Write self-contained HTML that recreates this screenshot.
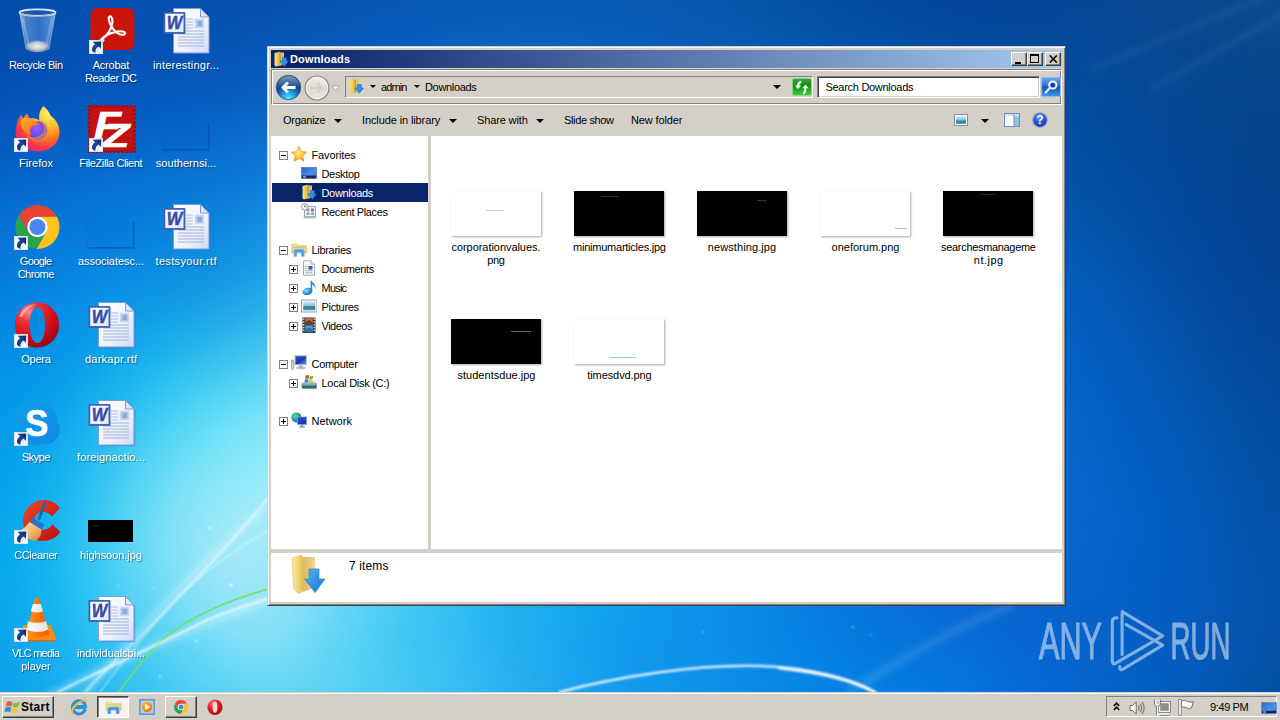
<!DOCTYPE html>
<html><head><meta charset="utf-8"><title>Downloads</title>
<style>
*{box-sizing:border-box;margin:0;padding:0}
html,body{width:1280px;height:720px;overflow:hidden}
body{position:relative;font-family:"Liberation Sans",sans-serif;font-size:11px;color:#000;background:#0c55b5}
.abs{position:absolute}
i{display:block;font-style:normal}
#wall{position:absolute;left:0;top:0;width:1280px;height:720px}
.dl{position:absolute;width:90px;text-align:center;color:#fff;font-size:11px;line-height:13px;text-shadow:1px 1px 1px rgba(0,0,0,.45);white-space:nowrap}
#tb{position:absolute;left:0;top:692px;width:1280px;height:28px;background:#d4d0c8}
#tb:before{content:"";position:absolute;left:0;top:1px;width:1280px;height:1px;background:#fff}
.btn{position:absolute;background:#d4d0c8;border:1px solid;border-color:#fff #404040 #404040 #fff;box-shadow:inset -1px -1px 0 #808080}
.btn.down{border-color:#404040 #fff #fff #404040;box-shadow:inset 1px 1px 0 #808080;background:#f5f4f1}
#tray{position:absolute;left:1106px;top:4px;width:171px;height:21px;border:1px solid;border-color:#808080 #fff #fff #808080}
#win{position:absolute;left:267px;top:46px;width:799px;height:560px;background:#d4d0c8;border:1px solid;border-color:#d4d0c8 #404040 #404040 #d4d0c8;box-shadow:inset 1px 1px 0 #fff,inset -1px -1px 0 #808080}
#win>*{position:absolute}
#title{left:3px;top:3px;width:791px;height:18px;background:linear-gradient(90deg,#0a246a 0%,#0a246a 3%,#a6caf0 100%);color:#fff;font-weight:bold;font-size:11px;line-height:18px}
.cb{position:absolute;top:2px;width:16px;height:14px;background:#d4d0c8;border:1px solid;border-color:#fff #404040 #404040 #fff;box-shadow:inset -1px -1px 0 #808080}
#nav{left:3px;top:22px;width:791px;height:36px;border:1px solid;border-color:#808080 #fff #fff #808080;box-shadow:inset 1px 1px 0 #fff,inset -1px -1px 0 #808080}
.sunk{position:absolute;background:#fff;border:1px solid;border-color:#808080 #fff #fff #808080;box-shadow:inset 1px 1px 0 #404040,inset -1px -1px 0 #d4d0c8}
.tx{letter-spacing:-.2px}
#cmd{left:3px;top:58px;width:791px;height:31px;line-height:31px;white-space:nowrap}
#cmd span{position:absolute;top:0}
.arr{position:absolute;width:0;height:0;border-style:solid;border-color:#000 transparent transparent transparent;border-width:4px 4px 0 4px}
#tree{left:3px;top:89px;width:157px;height:413px;background:#fff;overflow:hidden}
#files{left:163px;top:89px;width:631px;height:413px;background:#fff;overflow:hidden}
#det{left:3px;top:506px;width:791px;height:49px;background:#fff}
.tr{position:absolute;left:1px;width:156px;height:19px;line-height:19px;white-space:nowrap}
.tr.sel{background:#0a246a;color:#fff}
.tr span{position:absolute;top:1px}
.tr>*{margin-left:-1px}
.ex{position:absolute;top:6px;width:9px;height:9px;border:1px solid #808080;background:#fff}
.ex:before{content:"";position:absolute;left:1px;top:3px;width:5px;height:1px;background:#000}
.ex.p:after{content:"";position:absolute;left:3px;top:1px;width:1px;height:5px;background:#000}
.ti{position:absolute;top:1px;width:16px;height:16px}
.th{position:absolute;width:90px;height:45px;box-shadow:1px 1px 2px rgba(0,0,0,.35)}
.fl{position:absolute;width:120px;text-align:center;line-height:13px;font-size:11px}
.sunk1{position:absolute;border:1px solid;border-color:#808080 #fff #fff #808080}
</style></head><body>
<svg id="wall" width="1280" height="720" viewBox="0 0 1280 720">
<defs>
<linearGradient id="wbase" x1="0" y1="0" x2="1" y2="0"><stop offset="0" stop-color="#0f52b2"/><stop offset=".45" stop-color="#0f58b8"/><stop offset=".75" stop-color="#0b54b8"/><stop offset="1" stop-color="#094cb0"/></linearGradient>
<radialGradient id="wg1" cx="300" cy="600" r="1" gradientUnits="userSpaceOnUse" gradientTransform="translate(300 600) scale(1080 640) translate(-300 -600)">
<stop offset="0" stop-color="#48c0f4"/><stop offset=".25" stop-color="#2aa6ee"/><stop offset=".5" stop-color="#1a88e0"/><stop offset=".75" stop-color="#0e62ca"/><stop offset="1" stop-color="#0c58be" stop-opacity="0"/></radialGradient>
<radialGradient id="wg2" cx="300" cy="500" r="1" gradientUnits="userSpaceOnUse" gradientTransform="translate(300 500) scale(290 280) translate(-300 -500)">
<stop offset="0" stop-color="#8ee6fb"/><stop offset=".3" stop-color="#84e0fa" stop-opacity=".9"/><stop offset=".65" stop-color="#62ccf6" stop-opacity=".45"/><stop offset="1" stop-color="#48c0f4" stop-opacity="0"/></radialGradient>
<radialGradient id="wv1" cx="1280" cy="0" r="520" gradientUnits="userSpaceOnUse"><stop offset="0" stop-color="#053a8c" stop-opacity=".6"/><stop offset="1" stop-color="#053a8c" stop-opacity="0"/></radialGradient>
<radialGradient id="wv2" cx="1300" cy="760" r="260" gradientUnits="userSpaceOnUse"><stop offset="0" stop-color="#06348a" stop-opacity=".45"/><stop offset="1" stop-color="#06348a" stop-opacity="0"/></radialGradient>
<filter id="wmesh" x="-10%" y="-10%" width="120%" height="120%" color-interpolation-filters="sRGB"><feGaussianBlur stdDeviation="30"/></filter>
<filter id="wbl" x="-5%" y="-5%" width="110%" height="110%"><feGaussianBlur stdDeviation="0.8"/></filter>
<filter id="wbl2" x="-5%" y="-5%" width="110%" height="110%"><feGaussianBlur stdDeviation="3"/></filter>
</defs>
<rect width="1280" height="720" fill="#30b4f0"/>
<g filter="url(#wmesh)">
<rect x="-96" y="-96" width="49" height="49" fill="#054ba8"/>
<rect x="-48" y="-96" width="49" height="49" fill="#054ba8"/>
<rect x="0" y="-96" width="49" height="49" fill="#064ca9"/>
<rect x="48" y="-96" width="49" height="49" fill="#064eab"/>
<rect x="96" y="-96" width="49" height="49" fill="#064fad"/>
<rect x="144" y="-96" width="49" height="49" fill="#054fae"/>
<rect x="192" y="-96" width="49" height="49" fill="#054faf"/>
<rect x="240" y="-96" width="49" height="49" fill="#054faf"/>
<rect x="288" y="-96" width="49" height="49" fill="#0650b0"/>
<rect x="336" y="-96" width="49" height="49" fill="#0552b1"/>
<rect x="384" y="-96" width="49" height="49" fill="#0654b2"/>
<rect x="432" y="-96" width="49" height="49" fill="#0656b4"/>
<rect x="480" y="-96" width="49" height="49" fill="#0758b5"/>
<rect x="528" y="-96" width="49" height="49" fill="#0758b4"/>
<rect x="576" y="-96" width="49" height="49" fill="#0757b3"/>
<rect x="624" y="-96" width="49" height="49" fill="#0756b1"/>
<rect x="672" y="-96" width="49" height="49" fill="#0653ad"/>
<rect x="720" y="-96" width="49" height="49" fill="#0551a9"/>
<rect x="768" y="-96" width="49" height="49" fill="#044ea4"/>
<rect x="816" y="-96" width="49" height="49" fill="#034ba0"/>
<rect x="864" y="-96" width="49" height="49" fill="#03489d"/>
<rect x="912" y="-96" width="49" height="49" fill="#03459a"/>
<rect x="960" y="-96" width="49" height="49" fill="#034496"/>
<rect x="1008" y="-96" width="49" height="49" fill="#044595"/>
<rect x="1056" y="-96" width="49" height="49" fill="#054795"/>
<rect x="1104" y="-96" width="49" height="49" fill="#074893"/>
<rect x="1152" y="-96" width="49" height="49" fill="#094890"/>
<rect x="1200" y="-96" width="49" height="49" fill="#0a498e"/>
<rect x="1248" y="-96" width="49" height="49" fill="#0b4a8c"/>
<rect x="1296" y="-96" width="49" height="49" fill="#0c4a8c"/>
<rect x="1344" y="-96" width="49" height="49" fill="#0c4a8c"/>
<rect x="-96" y="-48" width="49" height="49" fill="#054ba8"/>
<rect x="-48" y="-48" width="49" height="49" fill="#054ba8"/>
<rect x="0" y="-48" width="49" height="49" fill="#064ca9"/>
<rect x="48" y="-48" width="49" height="49" fill="#064eab"/>
<rect x="96" y="-48" width="49" height="49" fill="#064fad"/>
<rect x="144" y="-48" width="49" height="49" fill="#054fae"/>
<rect x="192" y="-48" width="49" height="49" fill="#054faf"/>
<rect x="240" y="-48" width="49" height="49" fill="#054faf"/>
<rect x="288" y="-48" width="49" height="49" fill="#0650b0"/>
<rect x="336" y="-48" width="49" height="49" fill="#0552b1"/>
<rect x="384" y="-48" width="49" height="49" fill="#0654b2"/>
<rect x="432" y="-48" width="49" height="49" fill="#0656b4"/>
<rect x="480" y="-48" width="49" height="49" fill="#0758b5"/>
<rect x="528" y="-48" width="49" height="49" fill="#0758b4"/>
<rect x="576" y="-48" width="49" height="49" fill="#0757b3"/>
<rect x="624" y="-48" width="49" height="49" fill="#0756b1"/>
<rect x="672" y="-48" width="49" height="49" fill="#0653ad"/>
<rect x="720" y="-48" width="49" height="49" fill="#0551a9"/>
<rect x="768" y="-48" width="49" height="49" fill="#044ea4"/>
<rect x="816" y="-48" width="49" height="49" fill="#034ba0"/>
<rect x="864" y="-48" width="49" height="49" fill="#03489d"/>
<rect x="912" y="-48" width="49" height="49" fill="#03459a"/>
<rect x="960" y="-48" width="49" height="49" fill="#034496"/>
<rect x="1008" y="-48" width="49" height="49" fill="#044595"/>
<rect x="1056" y="-48" width="49" height="49" fill="#054795"/>
<rect x="1104" y="-48" width="49" height="49" fill="#074893"/>
<rect x="1152" y="-48" width="49" height="49" fill="#094890"/>
<rect x="1200" y="-48" width="49" height="49" fill="#0a498e"/>
<rect x="1248" y="-48" width="49" height="49" fill="#0b4a8c"/>
<rect x="1296" y="-48" width="49" height="49" fill="#0c4a8c"/>
<rect x="1344" y="-48" width="49" height="49" fill="#0c4a8c"/>
<rect x="-96" y="0" width="49" height="49" fill="#044cab"/>
<rect x="-48" y="0" width="49" height="49" fill="#044cab"/>
<rect x="0" y="0" width="49" height="49" fill="#044dac"/>
<rect x="48" y="0" width="49" height="49" fill="#054eae"/>
<rect x="96" y="0" width="49" height="49" fill="#0550b0"/>
<rect x="144" y="0" width="49" height="49" fill="#0450b0"/>
<rect x="192" y="0" width="49" height="49" fill="#0450b0"/>
<rect x="240" y="0" width="49" height="49" fill="#0551b1"/>
<rect x="288" y="0" width="49" height="49" fill="#0653b4"/>
<rect x="336" y="0" width="49" height="49" fill="#0656b6"/>
<rect x="384" y="0" width="49" height="49" fill="#0658b8"/>
<rect x="432" y="0" width="49" height="49" fill="#075bb9"/>
<rect x="480" y="0" width="49" height="49" fill="#085dba"/>
<rect x="528" y="0" width="49" height="49" fill="#085db9"/>
<rect x="576" y="0" width="49" height="49" fill="#075bb7"/>
<rect x="624" y="0" width="49" height="49" fill="#085ab5"/>
<rect x="672" y="0" width="49" height="49" fill="#0758b2"/>
<rect x="720" y="0" width="49" height="49" fill="#0555ad"/>
<rect x="768" y="0" width="49" height="49" fill="#0452a8"/>
<rect x="816" y="0" width="49" height="49" fill="#034fa5"/>
<rect x="864" y="0" width="49" height="49" fill="#034ba2"/>
<rect x="912" y="0" width="49" height="49" fill="#03499e"/>
<rect x="960" y="0" width="49" height="49" fill="#03479a"/>
<rect x="1008" y="0" width="49" height="49" fill="#044899"/>
<rect x="1056" y="0" width="49" height="49" fill="#054998"/>
<rect x="1104" y="0" width="49" height="49" fill="#074995"/>
<rect x="1152" y="0" width="49" height="49" fill="#084992"/>
<rect x="1200" y="0" width="49" height="49" fill="#084a8f"/>
<rect x="1248" y="0" width="49" height="49" fill="#0b4b8f"/>
<rect x="1296" y="0" width="49" height="49" fill="#0c4b8f"/>
<rect x="1344" y="0" width="49" height="49" fill="#0c4b8f"/>
<rect x="-96" y="48" width="49" height="49" fill="#034db0"/>
<rect x="-48" y="48" width="49" height="49" fill="#034db0"/>
<rect x="0" y="48" width="49" height="49" fill="#034fb2"/>
<rect x="48" y="48" width="49" height="49" fill="#0452b5"/>
<rect x="96" y="48" width="49" height="49" fill="#0453b6"/>
<rect x="144" y="48" width="49" height="49" fill="#0455b8"/>
<rect x="192" y="48" width="49" height="49" fill="#0557b8"/>
<rect x="240" y="48" width="49" height="49" fill="#0859b9"/>
<rect x="288" y="48" width="49" height="49" fill="#095ebe"/>
<rect x="336" y="48" width="49" height="49" fill="#0963c2"/>
<rect x="384" y="48" width="49" height="49" fill="#0a67c5"/>
<rect x="432" y="48" width="49" height="49" fill="#0c6ac6"/>
<rect x="480" y="48" width="49" height="49" fill="#0d6bc7"/>
<rect x="528" y="48" width="49" height="49" fill="#0d6ac5"/>
<rect x="576" y="48" width="49" height="49" fill="#0c68c3"/>
<rect x="624" y="48" width="49" height="49" fill="#0c66c1"/>
<rect x="672" y="48" width="49" height="49" fill="#0b63be"/>
<rect x="720" y="48" width="49" height="49" fill="#095fb9"/>
<rect x="768" y="48" width="49" height="49" fill="#075bb4"/>
<rect x="816" y="48" width="49" height="49" fill="#0657b1"/>
<rect x="864" y="48" width="49" height="49" fill="#0553ad"/>
<rect x="912" y="48" width="49" height="49" fill="#0550a9"/>
<rect x="960" y="48" width="49" height="49" fill="#044ea3"/>
<rect x="1008" y="48" width="49" height="49" fill="#034d9f"/>
<rect x="1056" y="48" width="49" height="49" fill="#034c9c"/>
<rect x="1104" y="48" width="49" height="49" fill="#054b98"/>
<rect x="1152" y="48" width="49" height="49" fill="#054a94"/>
<rect x="1200" y="48" width="49" height="49" fill="#054990"/>
<rect x="1248" y="48" width="49" height="49" fill="#06488d"/>
<rect x="1296" y="48" width="49" height="49" fill="#06488d"/>
<rect x="1344" y="48" width="49" height="49" fill="#06488d"/>
<rect x="-96" y="96" width="49" height="49" fill="#0454b9"/>
<rect x="-48" y="96" width="49" height="49" fill="#0454b9"/>
<rect x="0" y="96" width="49" height="49" fill="#0456bb"/>
<rect x="48" y="96" width="49" height="49" fill="#055abf"/>
<rect x="96" y="96" width="49" height="49" fill="#055dc2"/>
<rect x="144" y="96" width="49" height="49" fill="#0661c4"/>
<rect x="192" y="96" width="49" height="49" fill="#0764c6"/>
<rect x="240" y="96" width="49" height="49" fill="#0b68c8"/>
<rect x="288" y="96" width="49" height="49" fill="#0e6ecc"/>
<rect x="336" y="96" width="49" height="49" fill="#1075d0"/>
<rect x="384" y="96" width="49" height="49" fill="#127bd3"/>
<rect x="432" y="96" width="49" height="49" fill="#147dd4"/>
<rect x="480" y="96" width="49" height="49" fill="#157ed4"/>
<rect x="528" y="96" width="49" height="49" fill="#157cd3"/>
<rect x="576" y="96" width="49" height="49" fill="#1578d1"/>
<rect x="624" y="96" width="49" height="49" fill="#1374cf"/>
<rect x="672" y="96" width="49" height="49" fill="#1170cb"/>
<rect x="720" y="96" width="49" height="49" fill="#0f6cc6"/>
<rect x="768" y="96" width="49" height="49" fill="#0c66c1"/>
<rect x="816" y="96" width="49" height="49" fill="#0a61bd"/>
<rect x="864" y="96" width="49" height="49" fill="#085cba"/>
<rect x="912" y="96" width="49" height="49" fill="#0657b4"/>
<rect x="960" y="96" width="49" height="49" fill="#0553ac"/>
<rect x="1008" y="96" width="49" height="49" fill="#0450a5"/>
<rect x="1056" y="96" width="49" height="49" fill="#034d9e"/>
<rect x="1104" y="96" width="49" height="49" fill="#034b9a"/>
<rect x="1152" y="96" width="49" height="49" fill="#044995"/>
<rect x="1200" y="96" width="49" height="49" fill="#044790"/>
<rect x="1248" y="96" width="49" height="49" fill="#04468d"/>
<rect x="1296" y="96" width="49" height="49" fill="#05458c"/>
<rect x="1344" y="96" width="49" height="49" fill="#05458c"/>
<rect x="-96" y="144" width="49" height="49" fill="#0461c5"/>
<rect x="-48" y="144" width="49" height="49" fill="#0461c5"/>
<rect x="0" y="144" width="49" height="49" fill="#0563c8"/>
<rect x="48" y="144" width="49" height="49" fill="#0668cd"/>
<rect x="96" y="144" width="49" height="49" fill="#076dd1"/>
<rect x="144" y="144" width="49" height="49" fill="#0770d2"/>
<rect x="192" y="144" width="49" height="49" fill="#0973d3"/>
<rect x="240" y="144" width="49" height="49" fill="#0e78d6"/>
<rect x="288" y="144" width="49" height="49" fill="#1380da"/>
<rect x="336" y="144" width="49" height="49" fill="#1889dd"/>
<rect x="960" y="144" width="49" height="49" fill="#0658b4"/>
<rect x="1008" y="144" width="49" height="49" fill="#0453aa"/>
<rect x="1056" y="144" width="49" height="49" fill="#034fa2"/>
<rect x="1104" y="144" width="49" height="49" fill="#034c9d"/>
<rect x="1152" y="144" width="49" height="49" fill="#034998"/>
<rect x="1200" y="144" width="49" height="49" fill="#034692"/>
<rect x="1248" y="144" width="49" height="49" fill="#04438d"/>
<rect x="1296" y="144" width="49" height="49" fill="#04438d"/>
<rect x="1344" y="144" width="49" height="49" fill="#04438d"/>
<rect x="-96" y="192" width="49" height="49" fill="#046dd1"/>
<rect x="-48" y="192" width="49" height="49" fill="#046dd1"/>
<rect x="0" y="192" width="49" height="49" fill="#0570d4"/>
<rect x="48" y="192" width="49" height="49" fill="#0676d9"/>
<rect x="96" y="192" width="49" height="49" fill="#087bdb"/>
<rect x="144" y="192" width="49" height="49" fill="#097edb"/>
<rect x="192" y="192" width="49" height="49" fill="#0c82db"/>
<rect x="240" y="192" width="49" height="49" fill="#1388df"/>
<rect x="288" y="192" width="49" height="49" fill="#1b92e3"/>
<rect x="336" y="192" width="49" height="49" fill="#239ce6"/>
<rect x="960" y="192" width="49" height="49" fill="#075fbc"/>
<rect x="1008" y="192" width="49" height="49" fill="#0559b3"/>
<rect x="1056" y="192" width="49" height="49" fill="#0353ab"/>
<rect x="1104" y="192" width="49" height="49" fill="#034ea4"/>
<rect x="1152" y="192" width="49" height="49" fill="#034a9c"/>
<rect x="1200" y="192" width="49" height="49" fill="#034695"/>
<rect x="1248" y="192" width="49" height="49" fill="#03438f"/>
<rect x="1296" y="192" width="49" height="49" fill="#03438e"/>
<rect x="1344" y="192" width="49" height="49" fill="#03438e"/>
<rect x="-96" y="240" width="49" height="49" fill="#0478da"/>
<rect x="-48" y="240" width="49" height="49" fill="#0478da"/>
<rect x="0" y="240" width="49" height="49" fill="#057cdd"/>
<rect x="48" y="240" width="49" height="49" fill="#0683e2"/>
<rect x="96" y="240" width="49" height="49" fill="#0887e1"/>
<rect x="144" y="240" width="49" height="49" fill="#0a8bdf"/>
<rect x="192" y="240" width="49" height="49" fill="#0e91e1"/>
<rect x="240" y="240" width="49" height="49" fill="#199ae5"/>
<rect x="288" y="240" width="49" height="49" fill="#28a5e9"/>
<rect x="336" y="240" width="49" height="49" fill="#33afec"/>
<rect x="960" y="240" width="49" height="49" fill="#0765c3"/>
<rect x="1008" y="240" width="49" height="49" fill="#055fbd"/>
<rect x="1056" y="240" width="49" height="49" fill="#0359b5"/>
<rect x="1104" y="240" width="49" height="49" fill="#0352ac"/>
<rect x="1152" y="240" width="49" height="49" fill="#034ca3"/>
<rect x="1200" y="240" width="49" height="49" fill="#034899"/>
<rect x="1248" y="240" width="49" height="49" fill="#034492"/>
<rect x="1296" y="240" width="49" height="49" fill="#034491"/>
<rect x="1344" y="240" width="49" height="49" fill="#034491"/>
<rect x="-96" y="288" width="49" height="49" fill="#0382e0"/>
<rect x="-48" y="288" width="49" height="49" fill="#0382e0"/>
<rect x="0" y="288" width="49" height="49" fill="#0487e3"/>
<rect x="48" y="288" width="49" height="49" fill="#068fe7"/>
<rect x="96" y="288" width="49" height="49" fill="#0a97e6"/>
<rect x="144" y="288" width="49" height="49" fill="#109ee5"/>
<rect x="192" y="288" width="49" height="49" fill="#18a4e7"/>
<rect x="240" y="288" width="49" height="49" fill="#2baeeb"/>
<rect x="288" y="288" width="49" height="49" fill="#3ebaee"/>
<rect x="336" y="288" width="49" height="49" fill="#47c2f1"/>
<rect x="960" y="288" width="49" height="49" fill="#086aca"/>
<rect x="1008" y="288" width="49" height="49" fill="#0564c5"/>
<rect x="1056" y="288" width="49" height="49" fill="#035ebe"/>
<rect x="1104" y="288" width="49" height="49" fill="#0456b5"/>
<rect x="1152" y="288" width="49" height="49" fill="#044fa9"/>
<rect x="1200" y="288" width="49" height="49" fill="#044a9d"/>
<rect x="1248" y="288" width="49" height="49" fill="#034695"/>
<rect x="1296" y="288" width="49" height="49" fill="#044694"/>
<rect x="1344" y="288" width="49" height="49" fill="#044694"/>
<rect x="-96" y="336" width="49" height="49" fill="#038de5"/>
<rect x="-48" y="336" width="49" height="49" fill="#038de5"/>
<rect x="0" y="336" width="49" height="49" fill="#0491e7"/>
<rect x="48" y="336" width="49" height="49" fill="#089bea"/>
<rect x="96" y="336" width="49" height="49" fill="#10aaec"/>
<rect x="144" y="336" width="49" height="49" fill="#1eb8ee"/>
<rect x="192" y="336" width="49" height="49" fill="#32c1ef"/>
<rect x="240" y="336" width="49" height="49" fill="#4fcaf1"/>
<rect x="288" y="336" width="49" height="49" fill="#5ed1f4"/>
<rect x="336" y="336" width="49" height="49" fill="#5fd4f5"/>
<rect x="960" y="336" width="49" height="49" fill="#086dce"/>
<rect x="1008" y="336" width="49" height="49" fill="#0668ca"/>
<rect x="1056" y="336" width="49" height="49" fill="#0461c3"/>
<rect x="1104" y="336" width="49" height="49" fill="#045aba"/>
<rect x="1152" y="336" width="49" height="49" fill="#0453af"/>
<rect x="1200" y="336" width="49" height="49" fill="#034da3"/>
<rect x="1248" y="336" width="49" height="49" fill="#044999"/>
<rect x="1296" y="336" width="49" height="49" fill="#044897"/>
<rect x="1344" y="336" width="49" height="49" fill="#044897"/>
<rect x="-96" y="384" width="49" height="49" fill="#0395e9"/>
<rect x="-48" y="384" width="49" height="49" fill="#0395e9"/>
<rect x="0" y="384" width="49" height="49" fill="#059aea"/>
<rect x="48" y="384" width="49" height="49" fill="#0ea7ed"/>
<rect x="96" y="384" width="49" height="49" fill="#21bcf0"/>
<rect x="144" y="384" width="49" height="49" fill="#3cd0f4"/>
<rect x="192" y="384" width="49" height="49" fill="#5cdcf6"/>
<rect x="240" y="384" width="49" height="49" fill="#7ae4f8"/>
<rect x="288" y="384" width="49" height="49" fill="#7ee4f8"/>
<rect x="336" y="384" width="49" height="49" fill="#73e0f8"/>
<rect x="960" y="384" width="49" height="49" fill="#096fd2"/>
<rect x="1008" y="384" width="49" height="49" fill="#0769cd"/>
<rect x="1056" y="384" width="49" height="49" fill="#0563c7"/>
<rect x="1104" y="384" width="49" height="49" fill="#045dbe"/>
<rect x="1152" y="384" width="49" height="49" fill="#0357b4"/>
<rect x="1200" y="384" width="49" height="49" fill="#0351a8"/>
<rect x="1248" y="384" width="49" height="49" fill="#034b9d"/>
<rect x="1296" y="384" width="49" height="49" fill="#044a9c"/>
<rect x="1344" y="384" width="49" height="49" fill="#044a9c"/>
<rect x="-96" y="432" width="49" height="49" fill="#049beb"/>
<rect x="-48" y="432" width="49" height="49" fill="#049beb"/>
<rect x="0" y="432" width="49" height="49" fill="#06a1ec"/>
<rect x="48" y="432" width="49" height="49" fill="#15b2ef"/>
<rect x="96" y="432" width="49" height="49" fill="#3cc9f3"/>
<rect x="144" y="432" width="49" height="49" fill="#63dbf6"/>
<rect x="192" y="432" width="49" height="49" fill="#80e7f8"/>
<rect x="240" y="432" width="49" height="49" fill="#94edfa"/>
<rect x="288" y="432" width="49" height="49" fill="#90eaf9"/>
<rect x="336" y="432" width="49" height="49" fill="#7ce4f9"/>
<rect x="960" y="432" width="49" height="49" fill="#096fd3"/>
<rect x="1008" y="432" width="49" height="49" fill="#076bd0"/>
<rect x="1056" y="432" width="49" height="49" fill="#0566ca"/>
<rect x="1104" y="432" width="49" height="49" fill="#0460c3"/>
<rect x="1152" y="432" width="49" height="49" fill="#035ab9"/>
<rect x="1200" y="432" width="49" height="49" fill="#0353ae"/>
<rect x="1248" y="432" width="49" height="49" fill="#034ea2"/>
<rect x="1296" y="432" width="49" height="49" fill="#034da0"/>
<rect x="1344" y="432" width="49" height="49" fill="#034da0"/>
<rect x="-96" y="480" width="49" height="49" fill="#04a0ec"/>
<rect x="-48" y="480" width="49" height="49" fill="#04a0ec"/>
<rect x="0" y="480" width="49" height="49" fill="#08a8ee"/>
<rect x="48" y="480" width="49" height="49" fill="#1dbbf1"/>
<rect x="96" y="480" width="49" height="49" fill="#4ed1f4"/>
<rect x="144" y="480" width="49" height="49" fill="#7de1f7"/>
<rect x="192" y="480" width="49" height="49" fill="#99eaf8"/>
<rect x="240" y="480" width="49" height="49" fill="#a3edf9"/>
<rect x="288" y="480" width="49" height="49" fill="#94e9f9"/>
<rect x="336" y="480" width="49" height="49" fill="#79e0f8"/>
<rect x="960" y="480" width="49" height="49" fill="#096dd4"/>
<rect x="1008" y="480" width="49" height="49" fill="#086ad1"/>
<rect x="1056" y="480" width="49" height="49" fill="#0667ce"/>
<rect x="1104" y="480" width="49" height="49" fill="#0462c7"/>
<rect x="1152" y="480" width="49" height="49" fill="#035cbe"/>
<rect x="1200" y="480" width="49" height="49" fill="#0355b2"/>
<rect x="1248" y="480" width="49" height="49" fill="#034fa7"/>
<rect x="1296" y="480" width="49" height="49" fill="#034ea5"/>
<rect x="1344" y="480" width="49" height="49" fill="#034ea5"/>
<rect x="-96" y="528" width="49" height="49" fill="#04a5ed"/>
<rect x="-48" y="528" width="49" height="49" fill="#04a5ed"/>
<rect x="0" y="528" width="49" height="49" fill="#08adef"/>
<rect x="48" y="528" width="49" height="49" fill="#20bff2"/>
<rect x="96" y="528" width="49" height="49" fill="#53d4f5"/>
<rect x="144" y="528" width="49" height="49" fill="#85e2f7"/>
<rect x="192" y="528" width="49" height="49" fill="#a3e9f8"/>
<rect x="240" y="528" width="49" height="49" fill="#a7ebf8"/>
<rect x="288" y="528" width="49" height="49" fill="#8ee4f8"/>
<rect x="336" y="528" width="49" height="49" fill="#6bd9f7"/>
<rect x="384" y="528" width="49" height="49" fill="#4ecef5"/>
<rect x="432" y="528" width="49" height="49" fill="#3ac4f4"/>
<rect x="480" y="528" width="49" height="49" fill="#2bbaf3"/>
<rect x="528" y="528" width="49" height="49" fill="#22b2f1"/>
<rect x="576" y="528" width="49" height="49" fill="#1cabef"/>
<rect x="624" y="528" width="49" height="49" fill="#18a2ed"/>
<rect x="672" y="528" width="49" height="49" fill="#1498ea"/>
<rect x="720" y="528" width="49" height="49" fill="#108de6"/>
<rect x="768" y="528" width="49" height="49" fill="#0d83e1"/>
<rect x="816" y="528" width="49" height="49" fill="#0b7adc"/>
<rect x="864" y="528" width="49" height="49" fill="#0a73d8"/>
<rect x="912" y="528" width="49" height="49" fill="#0a6dd4"/>
<rect x="960" y="528" width="49" height="49" fill="#0969d1"/>
<rect x="1008" y="528" width="49" height="49" fill="#0967d0"/>
<rect x="1056" y="528" width="49" height="49" fill="#0766ce"/>
<rect x="1104" y="528" width="49" height="49" fill="#0462c8"/>
<rect x="1152" y="528" width="49" height="49" fill="#045cc0"/>
<rect x="1200" y="528" width="49" height="49" fill="#0456b5"/>
<rect x="1248" y="528" width="49" height="49" fill="#0351aa"/>
<rect x="1296" y="528" width="49" height="49" fill="#0450a8"/>
<rect x="1344" y="528" width="49" height="49" fill="#0450a8"/>
<rect x="-96" y="576" width="49" height="49" fill="#06a5ed"/>
<rect x="-48" y="576" width="49" height="49" fill="#06a5ed"/>
<rect x="0" y="576" width="49" height="49" fill="#09acef"/>
<rect x="48" y="576" width="49" height="49" fill="#1dbdf2"/>
<rect x="96" y="576" width="49" height="49" fill="#4cd1f5"/>
<rect x="144" y="576" width="49" height="49" fill="#78ddf7"/>
<rect x="192" y="576" width="49" height="49" fill="#98e5f8"/>
<rect x="240" y="576" width="49" height="49" fill="#a3e8f7"/>
<rect x="288" y="576" width="49" height="49" fill="#7edef7"/>
<rect x="336" y="576" width="49" height="49" fill="#57d2f5"/>
<rect x="384" y="576" width="49" height="49" fill="#3fc7f4"/>
<rect x="432" y="576" width="49" height="49" fill="#2fbdf3"/>
<rect x="480" y="576" width="49" height="49" fill="#21b2f2"/>
<rect x="528" y="576" width="49" height="49" fill="#18aaf0"/>
<rect x="576" y="576" width="49" height="49" fill="#11a2ee"/>
<rect x="624" y="576" width="49" height="49" fill="#0e9aec"/>
<rect x="672" y="576" width="49" height="49" fill="#0b91ea"/>
<rect x="720" y="576" width="49" height="49" fill="#0a89e6"/>
<rect x="768" y="576" width="49" height="49" fill="#0980e1"/>
<rect x="816" y="576" width="49" height="49" fill="#0878dc"/>
<rect x="864" y="576" width="49" height="49" fill="#0970d7"/>
<rect x="912" y="576" width="49" height="49" fill="#086ad3"/>
<rect x="960" y="576" width="49" height="49" fill="#0866d0"/>
<rect x="1008" y="576" width="49" height="49" fill="#0962cc"/>
<rect x="1056" y="576" width="49" height="49" fill="#0960ca"/>
<rect x="1104" y="576" width="49" height="49" fill="#065fc6"/>
<rect x="1152" y="576" width="49" height="49" fill="#045cbf"/>
<rect x="1200" y="576" width="49" height="49" fill="#0457b5"/>
<rect x="1248" y="576" width="49" height="49" fill="#0451aa"/>
<rect x="1296" y="576" width="49" height="49" fill="#0450a8"/>
<rect x="1344" y="576" width="49" height="49" fill="#0450a8"/>
<rect x="-96" y="624" width="49" height="49" fill="#089feb"/>
<rect x="-48" y="624" width="49" height="49" fill="#089feb"/>
<rect x="0" y="624" width="49" height="49" fill="#0da7ed"/>
<rect x="48" y="624" width="49" height="49" fill="#1db6f1"/>
<rect x="96" y="624" width="49" height="49" fill="#3ac6f4"/>
<rect x="144" y="624" width="49" height="49" fill="#56d2f6"/>
<rect x="192" y="624" width="49" height="49" fill="#72dbf7"/>
<rect x="240" y="624" width="49" height="49" fill="#86e1f7"/>
<rect x="288" y="624" width="49" height="49" fill="#6bd9f6"/>
<rect x="336" y="624" width="49" height="49" fill="#50cff4"/>
<rect x="384" y="624" width="49" height="49" fill="#41c7f3"/>
<rect x="432" y="624" width="49" height="49" fill="#32bdf3"/>
<rect x="480" y="624" width="49" height="49" fill="#24b2f2"/>
<rect x="528" y="624" width="49" height="49" fill="#1aa8f0"/>
<rect x="576" y="624" width="49" height="49" fill="#129fef"/>
<rect x="624" y="624" width="49" height="49" fill="#0e98ec"/>
<rect x="672" y="624" width="49" height="49" fill="#0b91ea"/>
<rect x="720" y="624" width="49" height="49" fill="#098be7"/>
<rect x="768" y="624" width="49" height="49" fill="#0784e4"/>
<rect x="816" y="624" width="49" height="49" fill="#067ee1"/>
<rect x="864" y="624" width="49" height="49" fill="#0677dd"/>
<rect x="912" y="624" width="49" height="49" fill="#0571d9"/>
<rect x="960" y="624" width="49" height="49" fill="#066cd5"/>
<rect x="1008" y="624" width="49" height="49" fill="#0765cf"/>
<rect x="1056" y="624" width="49" height="49" fill="#0762cb"/>
<rect x="1104" y="624" width="49" height="49" fill="#0560c6"/>
<rect x="1152" y="624" width="49" height="49" fill="#045cbe"/>
<rect x="1200" y="624" width="49" height="49" fill="#0456b3"/>
<rect x="1248" y="624" width="49" height="49" fill="#0451a8"/>
<rect x="1296" y="624" width="49" height="49" fill="#0450a6"/>
<rect x="1344" y="624" width="49" height="49" fill="#0450a6"/>
<rect x="-96" y="672" width="49" height="49" fill="#0a9be9"/>
<rect x="-48" y="672" width="49" height="49" fill="#0a9be9"/>
<rect x="0" y="672" width="49" height="49" fill="#0fa1eb"/>
<rect x="48" y="672" width="49" height="49" fill="#1cb0ef"/>
<rect x="96" y="672" width="49" height="49" fill="#2ebdf2"/>
<rect x="144" y="672" width="49" height="49" fill="#3dc8f4"/>
<rect x="192" y="672" width="49" height="49" fill="#51d1f5"/>
<rect x="240" y="672" width="49" height="49" fill="#64d7f5"/>
<rect x="288" y="672" width="49" height="49" fill="#60d4f4"/>
<rect x="336" y="672" width="49" height="49" fill="#53cef3"/>
<rect x="384" y="672" width="49" height="49" fill="#49c7f3"/>
<rect x="432" y="672" width="49" height="49" fill="#39bef2"/>
<rect x="480" y="672" width="49" height="49" fill="#2cb4f1"/>
<rect x="528" y="672" width="49" height="49" fill="#20a8f0"/>
<rect x="576" y="672" width="49" height="49" fill="#189eee"/>
<rect x="624" y="672" width="49" height="49" fill="#1298ec"/>
<rect x="672" y="672" width="49" height="49" fill="#0e94e9"/>
<rect x="720" y="672" width="49" height="49" fill="#0b8de7"/>
<rect x="768" y="672" width="49" height="49" fill="#0888e5"/>
<rect x="816" y="672" width="49" height="49" fill="#0584e5"/>
<rect x="864" y="672" width="49" height="49" fill="#0380e4"/>
<rect x="912" y="672" width="49" height="49" fill="#037ae0"/>
<rect x="960" y="672" width="49" height="49" fill="#0373db"/>
<rect x="1008" y="672" width="49" height="49" fill="#046bd4"/>
<rect x="1056" y="672" width="49" height="49" fill="#0368d0"/>
<rect x="1104" y="672" width="49" height="49" fill="#0363c7"/>
<rect x="1152" y="672" width="49" height="49" fill="#035cbc"/>
<rect x="1200" y="672" width="49" height="49" fill="#0356b0"/>
<rect x="1248" y="672" width="49" height="49" fill="#0350a4"/>
<rect x="1296" y="672" width="49" height="49" fill="#044fa2"/>
<rect x="1344" y="672" width="49" height="49" fill="#044fa2"/>
<rect x="-96" y="720" width="49" height="49" fill="#0a99e8"/>
<rect x="-48" y="720" width="49" height="49" fill="#0a99e8"/>
<rect x="0" y="720" width="49" height="49" fill="#0fa0e9"/>
<rect x="48" y="720" width="49" height="49" fill="#1caeed"/>
<rect x="96" y="720" width="49" height="49" fill="#2cbbf1"/>
<rect x="144" y="720" width="49" height="49" fill="#3bc5f3"/>
<rect x="192" y="720" width="49" height="49" fill="#4ecef4"/>
<rect x="240" y="720" width="49" height="49" fill="#5dd3f4"/>
<rect x="288" y="720" width="49" height="49" fill="#5cd2f3"/>
<rect x="336" y="720" width="49" height="49" fill="#51ccf2"/>
<rect x="384" y="720" width="49" height="49" fill="#46c4f1"/>
<rect x="432" y="720" width="49" height="49" fill="#3abdf1"/>
<rect x="480" y="720" width="49" height="49" fill="#2db3f0"/>
<rect x="528" y="720" width="49" height="49" fill="#21a7ee"/>
<rect x="576" y="720" width="49" height="49" fill="#189cec"/>
<rect x="624" y="720" width="49" height="49" fill="#1297ea"/>
<rect x="672" y="720" width="49" height="49" fill="#0f93e8"/>
<rect x="720" y="720" width="49" height="49" fill="#0b8de6"/>
<rect x="768" y="720" width="49" height="49" fill="#0886e4"/>
<rect x="816" y="720" width="49" height="49" fill="#0584e4"/>
<rect x="864" y="720" width="49" height="49" fill="#0381e4"/>
<rect x="912" y="720" width="49" height="49" fill="#037be0"/>
<rect x="960" y="720" width="49" height="49" fill="#0373da"/>
<rect x="1008" y="720" width="49" height="49" fill="#036cd4"/>
<rect x="1056" y="720" width="49" height="49" fill="#0269cf"/>
<rect x="1104" y="720" width="49" height="49" fill="#0263c6"/>
<rect x="1152" y="720" width="49" height="49" fill="#035cbb"/>
<rect x="1200" y="720" width="49" height="49" fill="#0355ae"/>
<rect x="1248" y="720" width="49" height="49" fill="#034fa1"/>
<rect x="1296" y="720" width="49" height="49" fill="#034ea0"/>
<rect x="1344" y="720" width="49" height="49" fill="#034ea0"/>
<rect x="-96" y="768" width="49" height="49" fill="#0a99e8"/>
<rect x="-48" y="768" width="49" height="49" fill="#0a99e8"/>
<rect x="0" y="768" width="49" height="49" fill="#0fa0e9"/>
<rect x="48" y="768" width="49" height="49" fill="#1caeed"/>
<rect x="96" y="768" width="49" height="49" fill="#2cbbf1"/>
<rect x="144" y="768" width="49" height="49" fill="#3bc5f3"/>
<rect x="192" y="768" width="49" height="49" fill="#4ecef4"/>
<rect x="240" y="768" width="49" height="49" fill="#5dd3f4"/>
<rect x="288" y="768" width="49" height="49" fill="#5cd2f3"/>
<rect x="336" y="768" width="49" height="49" fill="#51ccf2"/>
<rect x="384" y="768" width="49" height="49" fill="#46c4f1"/>
<rect x="432" y="768" width="49" height="49" fill="#3abdf1"/>
<rect x="480" y="768" width="49" height="49" fill="#2db3f0"/>
<rect x="528" y="768" width="49" height="49" fill="#21a7ee"/>
<rect x="576" y="768" width="49" height="49" fill="#189cec"/>
<rect x="624" y="768" width="49" height="49" fill="#1297ea"/>
<rect x="672" y="768" width="49" height="49" fill="#0f93e8"/>
<rect x="720" y="768" width="49" height="49" fill="#0b8de6"/>
<rect x="768" y="768" width="49" height="49" fill="#0886e4"/>
<rect x="816" y="768" width="49" height="49" fill="#0584e4"/>
<rect x="864" y="768" width="49" height="49" fill="#0381e4"/>
<rect x="912" y="768" width="49" height="49" fill="#037be0"/>
<rect x="960" y="768" width="49" height="49" fill="#0373da"/>
<rect x="1008" y="768" width="49" height="49" fill="#036cd4"/>
<rect x="1056" y="768" width="49" height="49" fill="#0269cf"/>
<rect x="1104" y="768" width="49" height="49" fill="#0263c6"/>
<rect x="1152" y="768" width="49" height="49" fill="#035cbb"/>
<rect x="1200" y="768" width="49" height="49" fill="#0355ae"/>
<rect x="1248" y="768" width="49" height="49" fill="#034fa1"/>
<rect x="1296" y="768" width="49" height="49" fill="#034ea0"/>
<rect x="1344" y="768" width="49" height="49" fill="#034ea0"/>
</g>
<path d="M1090 70 L1280 -10 M1150 90 L1290 10" stroke="#fff" stroke-width="5" opacity=".06" filter="url(#wbl2)"/>
<g fill="none" stroke-linecap="round" filter="url(#wbl2)">
<path d="M40 700 C120 660 200 625 275 596" stroke="#fff" stroke-width="7" opacity=".3"/>
<path d="M80 700 C130 640 200 560 275 500" stroke="#fff" stroke-width="8" opacity=".28"/>
<path d="M850 692 C900 660 950 630 1010 605" stroke="#fff" stroke-width="10" opacity=".1"/>
</g>
<path d="M119 692 C133 672 150 650 168 635 C195 614 230 600 268 589" stroke="#6be35a" stroke-width="1.7" opacity=".95" fill="none"/>
<g fill="none" stroke-linecap="round" filter="url(#wbl)">
<path d="M58 692 C100 671 153 647 207 620 C230 610 250 604 268 599" stroke="#fff" stroke-width="2.2" opacity=".7"/>
<path d="M85 692 C110 665 140 637 165 611 C195 580 230 545 268 498" stroke="#fff" stroke-width="1.8" opacity=".65"/>
<path d="M100 692 C120 665 150 625 189 587 C215 563 240 546 268 531" stroke="#fff" stroke-width="1.4" opacity=".5"/>
<path d="M560 692 C620 676 700 664 761 666 C810 668 850 678 874 692" stroke="#fff" stroke-width="2.4" opacity=".85"/>
<path d="M780 668 C825 673 856 681 876 693" stroke="#fff" stroke-width="3.6" opacity=".8"/>
</g>
<g filter="url(#wbl)"><circle cx="231" cy="585" r="1.6" fill="#fff" opacity="0.8"/><circle cx="210" cy="528" r="1.4" fill="#fff" opacity="0.7"/><circle cx="196" cy="641" r="1.2" fill="#fff" opacity="0.7"/><circle cx="160" cy="677" r="1.2" fill="#fff" opacity="0.6"/><circle cx="222" cy="522" r="1" fill="#fff" opacity="0.5"/><circle cx="154" cy="588" r="1" fill="#fff" opacity="0.5"/><circle cx="118" cy="585" r="1" fill="#fff" opacity="0.5"/><circle cx="703" cy="632" r="1" fill="#fff" opacity="0.5"/><circle cx="853" cy="627" r="1.1" fill="#fff" opacity="0.6"/><circle cx="871" cy="635" r="0.9" fill="#fff" opacity="0.4"/></g>
</svg>

<svg class="abs" style="left:13px;top:7px;overflow:visible" width="48" height="48" viewBox="0 0 48 48"><defs><linearGradient id="g1" x1="0" y1="0" x2="1" y2="0"><stop offset="0" stop-color="#dbeaf9" stop-opacity=".75"/><stop offset=".18" stop-color="#8fb6e8" stop-opacity=".5"/><stop offset=".55" stop-color="#6a9ee0" stop-opacity=".42"/><stop offset=".85" stop-color="#9cc0ee" stop-opacity=".5"/><stop offset="1" stop-color="#cfe0f6" stop-opacity=".7"/></linearGradient><radialGradient id="g2" cx=".5" cy=".5" r=".5"><stop offset="0" stop-color="#fff" stop-opacity=".9"/><stop offset=".65" stop-color="#e8dccb" stop-opacity=".8"/><stop offset="1" stop-color="#b9b4ae" stop-opacity=".35"/></radialGradient></defs><path d="M6.5 6 Q24 11.5 42.5 6 L36 42 Q24 47.5 13 42 Z" fill="url(#g1)" stroke="#cfe0f6" stroke-opacity=".45" stroke-width=".8"/><ellipse cx="24.4" cy="39.3" rx="11.6" ry="6" fill="url(#g2)"/><path d="M13.6 41 Q24 47 35.6 41" fill="none" stroke="#8a7f6a" stroke-width=".8" opacity=".6"/><ellipse cx="24.5" cy="5.6" rx="18" ry="3.2" fill="#2f6cc6" fill-opacity=".35" stroke="#d9e6f5" stroke-width="1.7"/><path d="M6.8 6.4 Q24 12.2 42.2 6.4" fill="none" stroke="#9a8f86" stroke-width=".9" opacity=".7"/><path d="M10 12 L16 40" fill="none" stroke="#e6f0fb" stroke-width="2" opacity=".25"/><path d="M38.5 12 L33.5 40" fill="none" stroke="#e6f0fb" stroke-width="2" opacity=".2"/></svg>
<div class="dl" style="left:-9px;top:59px"><span style="letter-spacing:-0.408px;margin-right:0.408px">Recycle Bin</span></div>
<svg class="abs" style="left:88px;top:7px;overflow:visible" width="48" height="48" viewBox="0 0 48 48"><g transform="translate(-.5 -1)"><rect x="3" y="2" width="44" height="42" rx="6.5" fill="#c9140c"/><path d="M13.5 33.5 C17 31.5 21 27.5 23.2 22.5 C25 18.2 25.3 13.3 23.8 11.2 C22.6 9.7 20.9 10.6 21.2 13 C21.8 18 25.5 24.3 30 27.2 C33 29.2 37.2 29.6 37.6 27.6 C38 25.6 33.8 24.8 29.5 25.6 C23.5 26.7 17.5 29.3 13.6 33.6 C11.8 35.8 14.4 36.4 16 34.2" fill="none" stroke="#fff" stroke-width="2.1" stroke-linecap="round" stroke-linejoin="round"/></g><g transform="translate(1 33)"><defs><linearGradient id="g3" x1="0" y1="1" x2="1" y2="0"><stop offset="0" stop-color="#0f2a6e"/><stop offset=".5" stop-color="#1a4a9a"/><stop offset="1" stop-color="#0e2464"/></linearGradient></defs><rect x=".5" y=".5" width="13" height="13" fill="#fff" stroke="#d5e2f2" stroke-width="1"/><path d="M3.4 1.8 L12.3 1.5 L12 9 L9.6 6.6 C7.4 8 6.2 10 6.4 12.7 C4.8 12.6 3.8 12 3.2 10.8 C2.6 8 3.8 5.6 6 4.2 Z" fill="url(#g3)"/><path d="M7 12.4 C7 10.4 8 9 9.6 8 L11 9.4 C9.6 10 8.6 11 8.4 12.6Z" fill="#c9d8ee" opacity=".7"/></g></svg>
<div class="dl" style="left:66px;top:59px"><span style="letter-spacing:-0.204px;margin-right:0.204px">Acrobat</span><br><span style="letter-spacing:-0.379px;margin-right:0.379px">Reader DC</span></div>
<svg class="abs" style="left:163px;top:7px;overflow:visible" width="48" height="48" viewBox="0 0 48 48"><defs><linearGradient id="g4" x1="0" y1="0" x2="1" y2="1"><stop offset="0" stop-color="#ffffff"/><stop offset=".6" stop-color="#eef2fd"/><stop offset="1" stop-color="#cfdaf6"/></linearGradient><linearGradient id="g5" x1="0" y1="0" x2="1" y2="1"><stop offset="0" stop-color="#ffffff"/><stop offset="1" stop-color="#dfe8fb"/></linearGradient></defs><path d="M10.5 1.5 H38 L46.5 10 V46.5 H10.5 Z" fill="#2b57b4" opacity=".35" transform="translate(.8 .8)"/><path d="M10.5 1.5 H37.5 L46 10 V46 H10.5 Z" fill="url(#g4)" stroke="#7f9bd6" stroke-width="1"/><path d="M37.5 1.5 V10 H46 Z" fill="#dbe5f8" stroke="#7f9bd6" stroke-width="1" stroke-linejoin="round"/><rect x="32" y="12" width="9" height="9" fill="#b9cbed" stroke="#d9e3f6" stroke-width="1"/><rect x="34.5" y="14" width="4.5" height="5" fill="#8fa9dc"/><rect x="15" y="23.5" width="26" height="1" fill="#9fb2da"/><rect x="15" y="26.5" width="26" height="1" fill="#9fb2da"/><rect x="15" y="29.5" width="26" height="1" fill="#9fb2da"/><rect x="15" y="32.5" width="26" height="1" fill="#9fb2da"/><rect x="15" y="35.5" width="26" height="1" fill="#9fb2da"/><rect x="15" y="38.5" width="26" height="1" fill="#9fb2da"/><rect x="23" y="11.5" width="7" height="1" fill="#a9bbe0"/><rect x="23" y="14.5" width="7" height="1" fill="#a9bbe0"/><rect x="23" y="17.5" width="7" height="1" fill="#a9bbe0"/><rect x="23" y="20.5" width="7" height="1" fill="#a9bbe0"/><rect x="1.8" y="6.3" width="20.6" height="20.6" fill="#2a4a9e" opacity=".45"/><rect x="1.4" y="5.9" width="20" height="20" fill="url(#g5)" stroke="#3b5fb8" stroke-width="1.7"/><text x="11.5" y="22.3" text-anchor="middle" font-family="Liberation Sans,sans-serif" font-weight="bold" font-style="italic" font-size="17.5" fill="#3a4fb0" stroke="#2b3c96" stroke-width=".4" textLength="15.5" lengthAdjust="spacingAndGlyphs">W</text></svg>
<div class="dl" style="left:141px;top:59px"><span style="letter-spacing:0.23px;margin-right:-0.23px">interestingr...</span></div>
<svg class="abs" style="left:13px;top:105px;overflow:visible" width="48" height="48" viewBox="0 0 48 48"><defs><radialGradient id="g6" cx=".75" cy=".15" r="1"><stop offset="0" stop-color="#fff36b"/><stop offset=".3" stop-color="#ffc02e"/><stop offset=".55" stop-color="#ff7a1f"/><stop offset=".8" stop-color="#f5314b"/><stop offset="1" stop-color="#d6209a"/></radialGradient><radialGradient id="g7" cx=".45" cy=".35" r=".7"><stop offset="0" stop-color="#a05cf8"/><stop offset=".6" stop-color="#6a4ae8"/><stop offset="1" stop-color="#4a36c8"/></radialGradient><linearGradient id="g8" x1="0" y1="0" x2="1" y2="1"><stop offset="0" stop-color="#ffb02a"/><stop offset="1" stop-color="#ff5a1f"/></linearGradient></defs><path d="M30.5 1 C34 4 36 7 37.5 10.5 C42.5 14 46.5 20 46.5 27 C46.5 38.5 37 46.5 25 46.5 C12.5 46.5 2.5 38 2.5 26 C2.5 19 5.5 13.5 8.5 9.5 C8.8 11.5 9.5 12.8 10.2 13.6 C11 11.5 12.5 9.5 14.8 8.4 C14.6 10.4 15.2 12 16.4 13.2 C20 12.5 23.5 13.2 26.5 15.5 C25.5 10 26.8 4.5 30.5 1 Z" fill="url(#g6)"/><circle cx="24.8" cy="25.8" r="9.6" fill="url(#g7)"/><path d="M8.5 14 C12 12 17 12.5 20.5 15 C23 16.8 25 19 28 19 C24.5 20.5 20 20 18 22.5 C16.5 24.5 17 27.5 18.5 30 C13 29 9 25 7.5 20 C7.2 17.8 7.6 15.6 8.5 14Z" fill="url(#g8)"/><path d="M27 14.5 C31.5 16 35.5 20 35.8 25.5 C36 31 32 35.5 26 36.2 C21 36.6 16.5 34 14.5 30.5 C19 33 24 32.5 27.5 30 C31 27.5 31.8 23.5 30.5 20.5 C29.8 18.5 28.8 16.5 27 14.5Z" fill="#ff9a2a" opacity=".55"/><g transform="translate(1 33)"><defs><linearGradient id="g9" x1="0" y1="1" x2="1" y2="0"><stop offset="0" stop-color="#0f2a6e"/><stop offset=".5" stop-color="#1a4a9a"/><stop offset="1" stop-color="#0e2464"/></linearGradient></defs><rect x=".5" y=".5" width="13" height="13" fill="#fff" stroke="#d5e2f2" stroke-width="1"/><path d="M3.4 1.8 L12.3 1.5 L12 9 L9.6 6.6 C7.4 8 6.2 10 6.4 12.7 C4.8 12.6 3.8 12 3.2 10.8 C2.6 8 3.8 5.6 6 4.2 Z" fill="url(#g9)"/><path d="M7 12.4 C7 10.4 8 9 9.6 8 L11 9.4 C9.6 10 8.6 11 8.4 12.6Z" fill="#c9d8ee" opacity=".7"/></g></svg>
<div class="dl" style="left:-9px;top:157px"><span style="letter-spacing:0.029px;margin-right:-0.029px">Firefox</span></div>
<svg class="abs" style="left:88px;top:105px;overflow:visible" width="48" height="48" viewBox="0 0 48 48"><rect x="0" y="0" width="48" height="48" fill="#a80d0d"/><rect x="2.5" y="2.5" width="43" height="43" fill="#c4100f"/><circle cx="3.0" cy="0.8" r=".8" fill="#1a5cc0"/><circle cx="3.0" cy="47.2" r=".8" fill="#1a60c4"/><circle cx="7.2" cy="0.8" r=".8" fill="#1a5cc0"/><circle cx="7.2" cy="47.2" r=".8" fill="#1a60c4"/><circle cx="11.4" cy="0.8" r=".8" fill="#1a5cc0"/><circle cx="11.4" cy="47.2" r=".8" fill="#1a60c4"/><circle cx="15.600000000000001" cy="0.8" r=".8" fill="#1a5cc0"/><circle cx="15.600000000000001" cy="47.2" r=".8" fill="#1a60c4"/><circle cx="19.8" cy="0.8" r=".8" fill="#1a5cc0"/><circle cx="19.8" cy="47.2" r=".8" fill="#1a60c4"/><circle cx="24.0" cy="0.8" r=".8" fill="#1a5cc0"/><circle cx="24.0" cy="47.2" r=".8" fill="#1a60c4"/><circle cx="28.200000000000003" cy="0.8" r=".8" fill="#1a5cc0"/><circle cx="28.200000000000003" cy="47.2" r=".8" fill="#1a60c4"/><circle cx="32.400000000000006" cy="0.8" r=".8" fill="#1a5cc0"/><circle cx="32.400000000000006" cy="47.2" r=".8" fill="#1a60c4"/><circle cx="36.6" cy="0.8" r=".8" fill="#1a5cc0"/><circle cx="36.6" cy="47.2" r=".8" fill="#1a60c4"/><circle cx="40.800000000000004" cy="0.8" r=".8" fill="#1a5cc0"/><circle cx="40.800000000000004" cy="47.2" r=".8" fill="#1a60c4"/><circle cx="45.0" cy="0.8" r=".8" fill="#1a5cc0"/><circle cx="45.0" cy="47.2" r=".8" fill="#1a60c4"/><circle cx="0.8" cy="3.0" r=".8" fill="#1a5cc0"/><circle cx="47.2" cy="3.0" r=".8" fill="#1a60c4"/><circle cx="0.8" cy="7.2" r=".8" fill="#1a5cc0"/><circle cx="47.2" cy="7.2" r=".8" fill="#1a60c4"/><circle cx="0.8" cy="11.4" r=".8" fill="#1a5cc0"/><circle cx="47.2" cy="11.4" r=".8" fill="#1a60c4"/><circle cx="0.8" cy="15.600000000000001" r=".8" fill="#1a5cc0"/><circle cx="47.2" cy="15.600000000000001" r=".8" fill="#1a60c4"/><circle cx="0.8" cy="19.8" r=".8" fill="#1a5cc0"/><circle cx="47.2" cy="19.8" r=".8" fill="#1a60c4"/><circle cx="0.8" cy="24.0" r=".8" fill="#1a5cc0"/><circle cx="47.2" cy="24.0" r=".8" fill="#1a60c4"/><circle cx="0.8" cy="28.200000000000003" r=".8" fill="#1a5cc0"/><circle cx="47.2" cy="28.200000000000003" r=".8" fill="#1a60c4"/><circle cx="0.8" cy="32.400000000000006" r=".8" fill="#1a5cc0"/><circle cx="47.2" cy="32.400000000000006" r=".8" fill="#1a60c4"/><circle cx="0.8" cy="36.6" r=".8" fill="#1a5cc0"/><circle cx="47.2" cy="36.6" r=".8" fill="#1a60c4"/><circle cx="0.8" cy="40.800000000000004" r=".8" fill="#1a5cc0"/><circle cx="47.2" cy="40.800000000000004" r=".8" fill="#1a60c4"/><circle cx="0.8" cy="45.0" r=".8" fill="#1a5cc0"/><circle cx="47.2" cy="45.0" r=".8" fill="#1a60c4"/><text x="6" y="33" font-family="Liberation Sans,sans-serif" font-weight="bold" font-style="italic" font-size="36.5" fill="#fff" stroke="#fff" stroke-width=".6" textLength="27" lengthAdjust="spacingAndGlyphs">F</text><text x="14.5" y="42" font-family="Liberation Sans,sans-serif" font-weight="bold" font-style="italic" font-size="33.5" fill="#fff" stroke="#fff" stroke-width=".6" textLength="27" lengthAdjust="spacingAndGlyphs">Z</text><g transform="translate(1 33)"><defs><linearGradient id="g10" x1="0" y1="1" x2="1" y2="0"><stop offset="0" stop-color="#0f2a6e"/><stop offset=".5" stop-color="#1a4a9a"/><stop offset="1" stop-color="#0e2464"/></linearGradient></defs><rect x=".5" y=".5" width="13" height="13" fill="#fff" stroke="#d5e2f2" stroke-width="1"/><path d="M3.4 1.8 L12.3 1.5 L12 9 L9.6 6.6 C7.4 8 6.2 10 6.4 12.7 C4.8 12.6 3.8 12 3.2 10.8 C2.6 8 3.8 5.6 6 4.2 Z" fill="url(#g10)"/><path d="M7 12.4 C7 10.4 8 9 9.6 8 L11 9.4 C9.6 10 8.6 11 8.4 12.6Z" fill="#c9d8ee" opacity=".7"/></g></svg>
<div class="dl" style="left:66px;top:157px"><span style="letter-spacing:-0.385px;margin-right:0.385px">FileZilla Client</span></div>
<svg class="abs" style="left:163px;top:105px;overflow:visible" width="48" height="48" viewBox="0 0 48 48"><rect x="-2.5" y="18.5" width="48" height="26" fill="#0a55c0" opacity=".07"/><path d="M45.8 19 V44.8 H-1" fill="none" stroke="#083c96" stroke-width="1.2" opacity=".55"/></svg>
<div class="dl" style="left:141px;top:157px"><span style="letter-spacing:0.048px;margin-right:-0.048px">southernsi...</span></div>
<svg class="abs" style="left:13px;top:203px;overflow:visible" width="48" height="48" viewBox="0 0 48 48"><clipPath id="chc10"><circle cx="24.5" cy="24" r="22"/></clipPath><g clip-path="url(#chc10)"><path d="M24.50 24.00 L33.33 29.10 L0.33 86.26 L-41.50 90.00 L-41.50 -9.00 L-17.33 -28.06 L15.67 29.10 Z" fill="#2ca24c"/><path d="M24.50 24.00 L24.50 13.80 L90.50 13.80 L90.50 -42.00 L-41.50 -42.00 L-17.33 -28.06 L15.67 29.10 Z" fill="#e94235"/><path d="M24.50 24.00 L24.50 13.80 L90.50 13.80 L90.50 90.00 L0.33 86.26 L33.33 29.10 Z" fill="#fcc31e"/></g><circle cx="24.5" cy="24" r="10.2" fill="#fff"/><circle cx="24.5" cy="24" r="8" fill="#4a86ee"/><g transform="translate(1 33)"><defs><linearGradient id="g12" x1="0" y1="1" x2="1" y2="0"><stop offset="0" stop-color="#0f2a6e"/><stop offset=".5" stop-color="#1a4a9a"/><stop offset="1" stop-color="#0e2464"/></linearGradient></defs><rect x=".5" y=".5" width="13" height="13" fill="#fff" stroke="#d5e2f2" stroke-width="1"/><path d="M3.4 1.8 L12.3 1.5 L12 9 L9.6 6.6 C7.4 8 6.2 10 6.4 12.7 C4.8 12.6 3.8 12 3.2 10.8 C2.6 8 3.8 5.6 6 4.2 Z" fill="url(#g12)"/><path d="M7 12.4 C7 10.4 8 9 9.6 8 L11 9.4 C9.6 10 8.6 11 8.4 12.6Z" fill="#c9d8ee" opacity=".7"/></g></svg>
<div class="dl" style="left:-9px;top:255px"><span style="letter-spacing:-0.637px;margin-right:0.637px">Google</span><br><span style="letter-spacing:-0.485px;margin-right:0.485px">Chrome</span></div>
<svg class="abs" style="left:88px;top:203px;overflow:visible" width="48" height="48" viewBox="0 0 48 48"><rect x="-2.5" y="18.5" width="48" height="26" fill="#0a55c0" opacity=".07"/><path d="M45.8 19 V44.8 H-1" fill="none" stroke="#083c96" stroke-width="1.2" opacity=".55"/></svg>
<div class="dl" style="left:66px;top:255px"><span style="letter-spacing:-0.034px;margin-right:0.034px">associatesc...</span></div>
<svg class="abs" style="left:163px;top:203px;overflow:visible" width="48" height="48" viewBox="0 0 48 48"><defs><linearGradient id="g13" x1="0" y1="0" x2="1" y2="1"><stop offset="0" stop-color="#ffffff"/><stop offset=".6" stop-color="#eef2fd"/><stop offset="1" stop-color="#cfdaf6"/></linearGradient><linearGradient id="g14" x1="0" y1="0" x2="1" y2="1"><stop offset="0" stop-color="#ffffff"/><stop offset="1" stop-color="#dfe8fb"/></linearGradient></defs><path d="M10.5 1.5 H38 L46.5 10 V46.5 H10.5 Z" fill="#2b57b4" opacity=".35" transform="translate(.8 .8)"/><path d="M10.5 1.5 H37.5 L46 10 V46 H10.5 Z" fill="url(#g13)" stroke="#7f9bd6" stroke-width="1"/><path d="M37.5 1.5 V10 H46 Z" fill="#dbe5f8" stroke="#7f9bd6" stroke-width="1" stroke-linejoin="round"/><rect x="32" y="12" width="9" height="9" fill="#b9cbed" stroke="#d9e3f6" stroke-width="1"/><rect x="34.5" y="14" width="4.5" height="5" fill="#8fa9dc"/><rect x="15" y="23.5" width="26" height="1" fill="#9fb2da"/><rect x="15" y="26.5" width="26" height="1" fill="#9fb2da"/><rect x="15" y="29.5" width="26" height="1" fill="#9fb2da"/><rect x="15" y="32.5" width="26" height="1" fill="#9fb2da"/><rect x="15" y="35.5" width="26" height="1" fill="#9fb2da"/><rect x="15" y="38.5" width="26" height="1" fill="#9fb2da"/><rect x="23" y="11.5" width="7" height="1" fill="#a9bbe0"/><rect x="23" y="14.5" width="7" height="1" fill="#a9bbe0"/><rect x="23" y="17.5" width="7" height="1" fill="#a9bbe0"/><rect x="23" y="20.5" width="7" height="1" fill="#a9bbe0"/><rect x="1.8" y="6.3" width="20.6" height="20.6" fill="#2a4a9e" opacity=".45"/><rect x="1.4" y="5.9" width="20" height="20" fill="url(#g14)" stroke="#3b5fb8" stroke-width="1.7"/><text x="11.5" y="22.3" text-anchor="middle" font-family="Liberation Sans,sans-serif" font-weight="bold" font-style="italic" font-size="17.5" fill="#3a4fb0" stroke="#2b3c96" stroke-width=".4" textLength="15.5" lengthAdjust="spacingAndGlyphs">W</text></svg>
<div class="dl" style="left:141px;top:255px"><span style="letter-spacing:0.345px;margin-right:-0.345px">testsyour.rtf</span></div>
<svg class="abs" style="left:13px;top:301px;overflow:visible" width="48" height="48" viewBox="0 0 48 48"><defs><radialGradient id="g15" cx=".3" cy=".2" r=".9"><stop offset="0" stop-color="#ff8a8a"/><stop offset=".25" stop-color="#f0343a"/><stop offset=".6" stop-color="#d8101c"/><stop offset="1" stop-color="#8e0610"/></radialGradient></defs><path fill-rule="evenodd" d="M24 1.5 C36.5 1.5 46 11 46 24 C46 37 36.5 46.5 24 46.5 C11.5 46.5 2 37 2 24 C2 11 11.5 1.5 24 1.5 Z M24.4 6.5 C19.5 6.5 16.8 14 16.8 24 C16.8 34 19.5 42 24.4 42 C29.3 42 32 34 32 24 C32 14 29.3 6.5 24.4 6.5 Z" fill="url(#g15)"/><path d="M6 16 C9 8 16 3.5 24 3.2 C17 5 12 9 9.5 16 Z" fill="#fff" opacity=".45"/><g transform="translate(1 33)"><defs><linearGradient id="g17" x1="0" y1="1" x2="1" y2="0"><stop offset="0" stop-color="#0f2a6e"/><stop offset=".5" stop-color="#1a4a9a"/><stop offset="1" stop-color="#0e2464"/></linearGradient></defs><rect x=".5" y=".5" width="13" height="13" fill="#fff" stroke="#d5e2f2" stroke-width="1"/><path d="M3.4 1.8 L12.3 1.5 L12 9 L9.6 6.6 C7.4 8 6.2 10 6.4 12.7 C4.8 12.6 3.8 12 3.2 10.8 C2.6 8 3.8 5.6 6 4.2 Z" fill="url(#g17)"/><path d="M7 12.4 C7 10.4 8 9 9.6 8 L11 9.4 C9.6 10 8.6 11 8.4 12.6Z" fill="#c9d8ee" opacity=".7"/></g></svg>
<div class="dl" style="left:-9px;top:353px"><span style="letter-spacing:-0.245px;margin-right:0.245px">Opera</span></div>
<svg class="abs" style="left:88px;top:301px;overflow:visible" width="48" height="48" viewBox="0 0 48 48"><defs><linearGradient id="g18" x1="0" y1="0" x2="1" y2="1"><stop offset="0" stop-color="#ffffff"/><stop offset=".6" stop-color="#eef2fd"/><stop offset="1" stop-color="#cfdaf6"/></linearGradient><linearGradient id="g19" x1="0" y1="0" x2="1" y2="1"><stop offset="0" stop-color="#ffffff"/><stop offset="1" stop-color="#dfe8fb"/></linearGradient></defs><path d="M10.5 1.5 H38 L46.5 10 V46.5 H10.5 Z" fill="#2b57b4" opacity=".35" transform="translate(.8 .8)"/><path d="M10.5 1.5 H37.5 L46 10 V46 H10.5 Z" fill="url(#g18)" stroke="#7f9bd6" stroke-width="1"/><path d="M37.5 1.5 V10 H46 Z" fill="#dbe5f8" stroke="#7f9bd6" stroke-width="1" stroke-linejoin="round"/><rect x="32" y="12" width="9" height="9" fill="#b9cbed" stroke="#d9e3f6" stroke-width="1"/><rect x="34.5" y="14" width="4.5" height="5" fill="#8fa9dc"/><rect x="15" y="23.5" width="26" height="1" fill="#9fb2da"/><rect x="15" y="26.5" width="26" height="1" fill="#9fb2da"/><rect x="15" y="29.5" width="26" height="1" fill="#9fb2da"/><rect x="15" y="32.5" width="26" height="1" fill="#9fb2da"/><rect x="15" y="35.5" width="26" height="1" fill="#9fb2da"/><rect x="15" y="38.5" width="26" height="1" fill="#9fb2da"/><rect x="23" y="11.5" width="7" height="1" fill="#a9bbe0"/><rect x="23" y="14.5" width="7" height="1" fill="#a9bbe0"/><rect x="23" y="17.5" width="7" height="1" fill="#a9bbe0"/><rect x="23" y="20.5" width="7" height="1" fill="#a9bbe0"/><rect x="1.8" y="6.3" width="20.6" height="20.6" fill="#2a4a9e" opacity=".45"/><rect x="1.4" y="5.9" width="20" height="20" fill="url(#g19)" stroke="#3b5fb8" stroke-width="1.7"/><text x="11.5" y="22.3" text-anchor="middle" font-family="Liberation Sans,sans-serif" font-weight="bold" font-style="italic" font-size="17.5" fill="#3a4fb0" stroke="#2b3c96" stroke-width=".4" textLength="15.5" lengthAdjust="spacingAndGlyphs">W</text></svg>
<div class="dl" style="left:66px;top:353px"><span style="letter-spacing:0.257px;margin-right:-0.257px">darkapr.rtf</span></div>
<svg class="abs" style="left:13px;top:399px;overflow:visible" width="48" height="48" viewBox="0 0 48 48"><defs><linearGradient id="g20" x1="0" y1="0" x2="1" y2="1"><stop offset="0" stop-color="#1aa3f0"/><stop offset="1" stop-color="#0b78d8"/></linearGradient></defs><path d="M14 2 C18 2 20 3 22 4 C24 3.5 26 3.5 28 3.8 C38 5 45 13 44.5 24 C46.5 27 47 30 46.5 33 C45.5 41 38 46.5 30 45 C28 46 25 46.5 22 46 C12 45 4.5 37 5 26 C3 22 2.5 18 3.5 14 C5 7 9 2 14 2 Z" fill="url(#g20)" opacity=".62"/><text x="23.8" y="37.3" text-anchor="middle" font-family="Liberation Sans,sans-serif" font-weight="bold" font-size="37.5" fill="#fff" stroke="#fff" stroke-width=".7" textLength="23" lengthAdjust="spacingAndGlyphs">S</text><g transform="translate(1 33)"><defs><linearGradient id="g21" x1="0" y1="1" x2="1" y2="0"><stop offset="0" stop-color="#0f2a6e"/><stop offset=".5" stop-color="#1a4a9a"/><stop offset="1" stop-color="#0e2464"/></linearGradient></defs><rect x=".5" y=".5" width="13" height="13" fill="#fff" stroke="#d5e2f2" stroke-width="1"/><path d="M3.4 1.8 L12.3 1.5 L12 9 L9.6 6.6 C7.4 8 6.2 10 6.4 12.7 C4.8 12.6 3.8 12 3.2 10.8 C2.6 8 3.8 5.6 6 4.2 Z" fill="url(#g21)"/><path d="M7 12.4 C7 10.4 8 9 9.6 8 L11 9.4 C9.6 10 8.6 11 8.4 12.6Z" fill="#c9d8ee" opacity=".7"/></g></svg>
<div class="dl" style="left:-9px;top:451px"><span style="letter-spacing:-0.47px;margin-right:0.47px">Skype</span></div>
<svg class="abs" style="left:88px;top:399px;overflow:visible" width="48" height="48" viewBox="0 0 48 48"><defs><linearGradient id="g22" x1="0" y1="0" x2="1" y2="1"><stop offset="0" stop-color="#ffffff"/><stop offset=".6" stop-color="#eef2fd"/><stop offset="1" stop-color="#cfdaf6"/></linearGradient><linearGradient id="g23" x1="0" y1="0" x2="1" y2="1"><stop offset="0" stop-color="#ffffff"/><stop offset="1" stop-color="#dfe8fb"/></linearGradient></defs><path d="M10.5 1.5 H38 L46.5 10 V46.5 H10.5 Z" fill="#2b57b4" opacity=".35" transform="translate(.8 .8)"/><path d="M10.5 1.5 H37.5 L46 10 V46 H10.5 Z" fill="url(#g22)" stroke="#7f9bd6" stroke-width="1"/><path d="M37.5 1.5 V10 H46 Z" fill="#dbe5f8" stroke="#7f9bd6" stroke-width="1" stroke-linejoin="round"/><rect x="32" y="12" width="9" height="9" fill="#b9cbed" stroke="#d9e3f6" stroke-width="1"/><rect x="34.5" y="14" width="4.5" height="5" fill="#8fa9dc"/><rect x="15" y="23.5" width="26" height="1" fill="#9fb2da"/><rect x="15" y="26.5" width="26" height="1" fill="#9fb2da"/><rect x="15" y="29.5" width="26" height="1" fill="#9fb2da"/><rect x="15" y="32.5" width="26" height="1" fill="#9fb2da"/><rect x="15" y="35.5" width="26" height="1" fill="#9fb2da"/><rect x="15" y="38.5" width="26" height="1" fill="#9fb2da"/><rect x="23" y="11.5" width="7" height="1" fill="#a9bbe0"/><rect x="23" y="14.5" width="7" height="1" fill="#a9bbe0"/><rect x="23" y="17.5" width="7" height="1" fill="#a9bbe0"/><rect x="23" y="20.5" width="7" height="1" fill="#a9bbe0"/><rect x="1.8" y="6.3" width="20.6" height="20.6" fill="#2a4a9e" opacity=".45"/><rect x="1.4" y="5.9" width="20" height="20" fill="url(#g23)" stroke="#3b5fb8" stroke-width="1.7"/><text x="11.5" y="22.3" text-anchor="middle" font-family="Liberation Sans,sans-serif" font-weight="bold" font-style="italic" font-size="17.5" fill="#3a4fb0" stroke="#2b3c96" stroke-width=".4" textLength="15.5" lengthAdjust="spacingAndGlyphs">W</text></svg>
<div class="dl" style="left:66px;top:451px"><span style="letter-spacing:0.132px;margin-right:-0.132px">foreignactio...</span></div>
<svg class="abs" style="left:13px;top:497px;overflow:visible" width="48" height="48" viewBox="0 0 48 48"><defs><linearGradient id="g24" x1="0" y1="0" x2="1" y2="1"><stop offset="0" stop-color="#ee4a2e"/><stop offset=".5" stop-color="#d8261c"/><stop offset="1" stop-color="#b81414"/></linearGradient><linearGradient id="g25" x1="0" y1="0" x2="1" y2="1"><stop offset="0" stop-color="#fbe6b8"/><stop offset=".6" stop-color="#f2b46a"/><stop offset="1" stop-color="#e0763a"/></linearGradient></defs><path d="M47 11 C42 4.5 34 2 27 3.5 C17 5.5 10 14 10 24 C10 35 18 43.5 29 44 C36 44.3 43 41 47.5 35 L39.5 27.5 C37 31 33.5 33 29.5 32.8 C24.5 32.5 21 28.5 21 24 C21 19 24.5 15 29.5 14.8 C33 14.7 36.5 16.5 39 19.5 Z" fill="url(#g24)"/><path d="M32 5.5 L26 22" stroke="#1766b4" stroke-width="2.6" stroke-linecap="round"/><path d="M19.5 21 L31.5 27.5 L28.5 32.5 L16.5 25 Z" fill="#2a73c8"/><path d="M16.5 25 L28.5 32.5 C29 38 26 42 21.5 44 L14 41 L9 36 L4 35.5 C9 33 13.5 29.5 16.5 25Z" fill="url(#g25)"/><g transform="translate(1 33)"><defs><linearGradient id="g26" x1="0" y1="1" x2="1" y2="0"><stop offset="0" stop-color="#0f2a6e"/><stop offset=".5" stop-color="#1a4a9a"/><stop offset="1" stop-color="#0e2464"/></linearGradient></defs><rect x=".5" y=".5" width="13" height="13" fill="#fff" stroke="#d5e2f2" stroke-width="1"/><path d="M3.4 1.8 L12.3 1.5 L12 9 L9.6 6.6 C7.4 8 6.2 10 6.4 12.7 C4.8 12.6 3.8 12 3.2 10.8 C2.6 8 3.8 5.6 6 4.2 Z" fill="url(#g26)"/><path d="M7 12.4 C7 10.4 8 9 9.6 8 L11 9.4 C9.6 10 8.6 11 8.4 12.6Z" fill="#c9d8ee" opacity=".7"/></g></svg>
<div class="dl" style="left:-9px;top:549px"><span style="letter-spacing:-0.424px;margin-right:0.424px">CCleaner</span></div>
<svg class="abs" style="left:88px;top:497px;overflow:visible" width="48" height="48" viewBox="0 0 48 48"><rect x="0" y="23" width="45" height="22" fill="#000"/><rect x="5" y="28" width="6" height="1" fill="#4a1018"/></svg>
<div class="dl" style="left:66px;top:549px"><span style="letter-spacing:-0.054px;margin-right:0.054px">highsoon.jpg</span></div>
<svg class="abs" style="left:13px;top:595px;overflow:visible" width="48" height="48" viewBox="0 0 48 48"><defs><linearGradient id="g27" x1="0" y1="0" x2="1" y2="0"><stop offset="0" stop-color="#ff9a2a"/><stop offset=".45" stop-color="#ff7a00"/><stop offset="1" stop-color="#e85f00"/></linearGradient><linearGradient id="g28" x1="0" y1="0" x2="1" y2="0"><stop offset="0" stop-color="#ffffff"/><stop offset="1" stop-color="#e4e0dc"/></linearGradient></defs><path d="M10 30 H38 L43.4 45 H8.8 Z" fill="#f78a1a"/><path d="M8.8 45 H43.4 L43 46.4 H9.2Z" fill="#d96a08"/><path d="M22 3.4 Q23.8 .4 25.8 3.4 L36.4 39.5 Q24 45 13 39.5 Z" fill="url(#g27)"/><path d="M19.9 9 L27.8 9 L30 16.2 Q24 18.6 17.9 16.2 Z" fill="url(#g28)"/><path d="M15 26.2 Q24 29.4 33 26.2 L35.5 34.5 Q24 39.5 13.8 34.5 Z" fill="url(#g28)"/><g transform="translate(1 33)"><defs><linearGradient id="g29" x1="0" y1="1" x2="1" y2="0"><stop offset="0" stop-color="#0f2a6e"/><stop offset=".5" stop-color="#1a4a9a"/><stop offset="1" stop-color="#0e2464"/></linearGradient></defs><rect x=".5" y=".5" width="13" height="13" fill="#fff" stroke="#d5e2f2" stroke-width="1"/><path d="M3.4 1.8 L12.3 1.5 L12 9 L9.6 6.6 C7.4 8 6.2 10 6.4 12.7 C4.8 12.6 3.8 12 3.2 10.8 C2.6 8 3.8 5.6 6 4.2 Z" fill="url(#g29)"/><path d="M7 12.4 C7 10.4 8 9 9.6 8 L11 9.4 C9.6 10 8.6 11 8.4 12.6Z" fill="#c9d8ee" opacity=".7"/></g></svg>
<div class="dl" style="left:-9px;top:647px"><span style="letter-spacing:-0.79px;margin-right:0.79px">VLC media</span><br><span style="letter-spacing:-0.134px;margin-right:0.134px">player</span></div>
<svg class="abs" style="left:88px;top:595px;overflow:visible" width="48" height="48" viewBox="0 0 48 48"><defs><linearGradient id="g30" x1="0" y1="0" x2="1" y2="1"><stop offset="0" stop-color="#ffffff"/><stop offset=".6" stop-color="#eef2fd"/><stop offset="1" stop-color="#cfdaf6"/></linearGradient><linearGradient id="g31" x1="0" y1="0" x2="1" y2="1"><stop offset="0" stop-color="#ffffff"/><stop offset="1" stop-color="#dfe8fb"/></linearGradient></defs><path d="M10.5 1.5 H38 L46.5 10 V46.5 H10.5 Z" fill="#2b57b4" opacity=".35" transform="translate(.8 .8)"/><path d="M10.5 1.5 H37.5 L46 10 V46 H10.5 Z" fill="url(#g30)" stroke="#7f9bd6" stroke-width="1"/><path d="M37.5 1.5 V10 H46 Z" fill="#dbe5f8" stroke="#7f9bd6" stroke-width="1" stroke-linejoin="round"/><rect x="32" y="12" width="9" height="9" fill="#b9cbed" stroke="#d9e3f6" stroke-width="1"/><rect x="34.5" y="14" width="4.5" height="5" fill="#8fa9dc"/><rect x="15" y="23.5" width="26" height="1" fill="#9fb2da"/><rect x="15" y="26.5" width="26" height="1" fill="#9fb2da"/><rect x="15" y="29.5" width="26" height="1" fill="#9fb2da"/><rect x="15" y="32.5" width="26" height="1" fill="#9fb2da"/><rect x="15" y="35.5" width="26" height="1" fill="#9fb2da"/><rect x="15" y="38.5" width="26" height="1" fill="#9fb2da"/><rect x="23" y="11.5" width="7" height="1" fill="#a9bbe0"/><rect x="23" y="14.5" width="7" height="1" fill="#a9bbe0"/><rect x="23" y="17.5" width="7" height="1" fill="#a9bbe0"/><rect x="23" y="20.5" width="7" height="1" fill="#a9bbe0"/><rect x="1.8" y="6.3" width="20.6" height="20.6" fill="#2a4a9e" opacity=".45"/><rect x="1.4" y="5.9" width="20" height="20" fill="url(#g31)" stroke="#3b5fb8" stroke-width="1.7"/><text x="11.5" y="22.3" text-anchor="middle" font-family="Liberation Sans,sans-serif" font-weight="bold" font-style="italic" font-size="17.5" fill="#3a4fb0" stroke="#2b3c96" stroke-width=".4" textLength="15.5" lengthAdjust="spacingAndGlyphs">W</text></svg>
<div class="dl" style="left:66px;top:647px"><span style="letter-spacing:-0.06px;margin-right:0.06px">individualsbi...</span></div>
<div id="win">
<div id="title"><svg class="abs" style="left:2px;top:1px;" width="16" height="16" viewBox="0 0 16 16"><defs><linearGradient id="g42" x1="0" y1="0" x2="1" y2="0"><stop offset="0" stop-color="#f7e08a"/><stop offset=".5" stop-color="#efc85a"/><stop offset="1" stop-color="#d9a93a"/></linearGradient></defs><path d="M1.5 2 L6.5 .8 L8 2 V14.5 L2.5 15.5 L1.5 14 Z" fill="url(#g42)"/><path d="M7 1.5 L11 1.5 V13 L7.5 14.8 Z" fill="#e9c35a"/><path d="M7.2 1.8 V14.6" stroke="#a8873a" stroke-width=".8"/><path d="M9.3 6.5 H13.3 V10 H15.6 L11.3 15.2 L7 10 H9.3 Z" fill="#2f8fe6" stroke="#1a6ac4" stroke-width=".6"/></svg><span class="abs" style="left:19px;top:0;letter-spacing:0.166px;">Downloads</span>
<div class="cb" style="left:740px"><i class="abs" style="left:3px;top:9px;width:6px;height:2px;background:#000"></i></div>
<div class="cb" style="left:756px"><i class="abs" style="left:2px;top:1px;width:9px;height:9px;border:1px solid #000;border-top-width:2px"></i></div>
<div class="cb" style="left:774px"><svg class="abs" style="left:3px;top:2px" width="9" height="8" viewBox="0 0 9 8"><path d="M.8 .5L7.8 7.5M7.8 .5L.8 7.5" stroke="#000" stroke-width="1.7" fill="none"/></svg></div>
</div>
<div id="nav">
<svg class="abs" style="left:3px;top:4px;" width="27" height="27" viewBox="0 0 27 27"><defs><radialGradient id="g43" cx=".5" cy=".95" r=".9"><stop offset="0" stop-color="#6ae6ff"/><stop offset=".28" stop-color="#22a4e4"/><stop offset=".58" stop-color="#154f92"/><stop offset="1" stop-color="#24507f"/></radialGradient><linearGradient id="g44" x1="0" y1="0" x2="0" y2="1"><stop offset="0" stop-color="#fff" stop-opacity=".75"/><stop offset="1" stop-color="#fff" stop-opacity=".05"/></linearGradient></defs><circle cx="13.5" cy="13.5" r="13.2" fill="#bcd6ec" opacity=".7"/><circle cx="13.5" cy="13.5" r="12.2" fill="url(#g43)" stroke="#1f4f8e" stroke-width=".8"/><path d="M2.4 11 A11.3 11.3 0 0 1 24.6 11 Q13.5 15 2.4 11Z" fill="url(#g44)" opacity=".55"/><path d="M6 13.5 L12 7.4 L14 9.4 L11.4 12 H20.6 V15 H11.4 L14 17.6 L12 19.6 Z" fill="#fff"/></svg>
<svg class="abs" style="left:31.5px;top:4.5px;" width="26" height="26" viewBox="0 0 26 26"><defs><linearGradient id="g45" x1="0" y1="0" x2="0" y2="1"><stop offset="0" stop-color="#f4f2ee"/><stop offset=".5" stop-color="#dcd9d3"/><stop offset="1" stop-color="#e8e6e1"/></linearGradient></defs><circle cx="13" cy="13" r="12" fill="url(#g45)" stroke="#8c8882" stroke-width="1.2"/><circle cx="13" cy="13" r="10.6" fill="none" stroke="#fff" stroke-width=".8" opacity=".7"/><path d="M20 13 L14 7.1 L12.1 9.1 L14.5 11.5 H5.9 V14.5 H14.5 L12.1 16.9 L14 18.9 Z" fill="#d2cfc9" stroke="#e9e7e3" stroke-width=".5"/></svg>
<svg class="abs" style="left:59px;top:15px" width="9" height="6" viewBox="0 0 9 6"><path d="M.5 .8 H8.5 L4.5 5.2Z" fill="#fbfaf8" stroke="#a8a49c" stroke-width=".9"/></svg>
<div class="sunk1" style="left:73px;top:6px;width:468px;height:22px"></div>
<svg class="abs" style="left:75.5px;top:7.5px;" width="16" height="16" viewBox="0 0 16 16"><defs><linearGradient id="g46" x1="0" y1="0" x2="1" y2="0"><stop offset="0" stop-color="#f7e08a"/><stop offset=".5" stop-color="#efc85a"/><stop offset="1" stop-color="#d9a93a"/></linearGradient></defs><path d="M1.5 2 L6.5 .8 L8 2 V14.5 L2.5 15.5 L1.5 14 Z" fill="url(#g46)"/><path d="M7 1.5 L11 1.5 V13 L7.5 14.8 Z" fill="#e9c35a"/><path d="M7.2 1.8 V14.6" stroke="#a8873a" stroke-width=".8"/><path d="M9.3 6.5 H13.3 V10 H15.6 L11.3 15.2 L7 10 H9.3 Z" fill="#2f8fe6" stroke="#1a6ac4" stroke-width=".6"/></svg>
<span class="abs" style="left:109px;top:6px;line-height:22px;letter-spacing:-0.867px;">admin</span>
<span class="abs" style="left:153px;top:6px;line-height:22px;letter-spacing:-0.328px;">Downloads</span>
<i class="arr" style="left:97.5px;top:15px;border-width:3px 3px 0 3px"></i>
<i class="arr" style="left:142px;top:15px;border-width:3px 3px 0 3px"></i>
<i class="arr" style="left:501px;top:15px;border-width:4px 4px 0 4px"></i>
<svg class="abs" style="left:519.5px;top:8px;" width="20" height="18" viewBox="0 0 20 18"><defs><linearGradient id="g47" x1="0" y1="0" x2="0" y2="1"><stop offset="0" stop-color="#3aa83a"/><stop offset=".4" stop-color="#178a1a"/><stop offset=".55" stop-color="#1c9a1e"/><stop offset="1" stop-color="#45cc45"/></linearGradient></defs><rect x=".5" y=".5" width="19" height="17" rx="1.5" fill="url(#g47)" stroke="#86d884" stroke-width="1"/><path d="M2.7 7.4 H9.3 L6 11 Z" fill="#f4fcf2"/><path d="M6 8 Q6 4.6 9.4 3.4" fill="none" stroke="#f4fcf2" stroke-width="2.1"/><path d="M13.5 6.4 L16.7 10.2 H10.3 Z" fill="#f4fcf2"/><path d="M13.5 9.8 Q13.5 13.6 11.4 15.8" fill="none" stroke="#f4fcf2" stroke-width="2.1"/></svg>
<div class="sunk" style="left:545px;top:6px;width:223px;height:22px"></div>
<span class="abs" style="left:553.5px;top:6px;line-height:22px;letter-spacing:-0.29px;">Search Downloads</span>
<svg class="abs" style="left:769px;top:7px;" width="20" height="20" viewBox="0 0 20 20"><defs><linearGradient id="g48" x1="0" y1="0" x2="0" y2="1"><stop offset="0" stop-color="#6aa8f0"/><stop offset=".45" stop-color="#2a6fd8"/><stop offset=".5" stop-color="#1450c0"/><stop offset="1" stop-color="#3f9af0"/></linearGradient></defs><rect x=".5" y=".5" width="19" height="19" rx="1.5" fill="url(#g48)" stroke="#8fb8ee" stroke-width="1"/><circle cx="11.8" cy="8" r="3.6" fill="#1a3fb0" stroke="#fff" stroke-width="2"/><path d="M8.8 11 L4.6 15.4" stroke="#e8f0fc" stroke-width="2.2" stroke-linecap="round"/></svg>
</div>
<div id="cmd">
<span style="left:12px;letter-spacing:-0.277px;">Organize</span><i class="arr" style="left:63px;top:14px"></i>
<span style="left:91px;letter-spacing:-0.111px;">Include in library</span><i class="arr" style="left:178px;top:14px"></i>
<span style="left:206px;letter-spacing:-0.132px;">Share with</span><i class="arr" style="left:265px;top:14px"></i>
<span style="left:293px;letter-spacing:-0.356px;">Slide show</span>
<span style="left:360px;letter-spacing:-0.12px;">New folder</span>
<svg class="abs" style="left:683px;top:9px;" width="14" height="12" viewBox="0 0 14 12"><defs><linearGradient id="g49" x1="0" y1="0" x2="0" y2="1"><stop offset="0" stop-color="#dff0fa"/><stop offset=".5" stop-color="#7fc0e0"/><stop offset=".65" stop-color="#2f7f90"/><stop offset="1" stop-color="#4aa6c8"/></linearGradient></defs><rect x=".5" y=".5" width="13" height="11" fill="#f6f8fa" stroke="#7f90a8" stroke-width="1"/><rect x="2" y="2" width="10" height="8" fill="url(#g49)"/></svg>
<i class="arr" style="left:710px;top:14px"></i>
<svg class="abs" style="left:733px;top:8px;" width="16" height="14" viewBox="0 0 16 14"><rect x=".5" y=".5" width="15" height="13" fill="#fdfeff" stroke="#6f8ab4" stroke-width="1"/><rect x="1" y="1" width="14" height="2.2" fill="#cfe0f2"/><rect x="10" y="3.2" width="5" height="10" fill="#8fc4dc"/><path d="M10 1 V13.5" stroke="#6f8ab4" stroke-width=".9"/></svg>
<svg class="abs" style="left:761px;top:7px;" width="16" height="16" viewBox="0 0 16 16"><defs><radialGradient id="g50" cx=".45" cy=".3" r=".8"><stop offset="0" stop-color="#6f9af0"/><stop offset=".5" stop-color="#2a50c8"/><stop offset="1" stop-color="#142f98"/></radialGradient></defs><circle cx="8" cy="8" r="7.3" fill="url(#g50)" stroke="#8fa6d8" stroke-width="1.1"/><text x="8" y="12.2" text-anchor="middle" font-family="Liberation Sans,sans-serif" font-weight="bold" font-size="12" fill="#fff">?</text></svg>
</div>
<div id="tree"><div class="tr" style="top:9px"><i class="ex" style="left:8px"></i><svg class="ti" style="left:20px;margin-top:0px" width="16" height="16" viewBox="0 0 16 16"><defs><radialGradient id="g32" cx=".45" cy=".4" r=".6"><stop offset="0" stop-color="#fff27a"/><stop offset=".6" stop-color="#fbc93a"/><stop offset="1" stop-color="#f09a22"/></radialGradient></defs><path d="M8 .6 L10.3 5.6 L15.6 6.2 L11.7 9.9 L12.8 15.2 L8 12.5 L3.2 15.2 L4.3 9.9 L.4 6.2 L5.7 5.6 Z" fill="url(#g32)" stroke="#ec9a3a" stroke-width=".9" stroke-linejoin="round"/></svg><span style="left:40.5px;letter-spacing:-0.119px;">Favorites</span></div><div class="tr" style="top:28px"><svg class="ti" style="left:30px;margin-top:0px" width="16" height="16" viewBox="0 0 16 16"><defs><linearGradient id="g33" x1="0" y1="0" x2="1" y2="1"><stop offset="0" stop-color="#2a5fc8"/><stop offset=".6" stop-color="#4a8fe6"/><stop offset="1" stop-color="#2f6fd0"/></linearGradient></defs><rect x=".5" y="2.5" width="15" height="11" fill="url(#g33)" stroke="#5a78b8" stroke-width=".8"/><rect x="1" y="10.6" width="14" height="2.6" fill="#1c2a52"/><rect x="2" y="11.3" width="3" height="1.2" fill="#9fc0ee"/></svg><span style="left:50.5px;letter-spacing:-0.327px;">Desktop</span></div><div class="tr sel" style="top:47px"><svg class="ti" style="left:30px;margin-top:0px" width="16" height="16" viewBox="0 0 16 16"><defs><linearGradient id="g34" x1="0" y1="0" x2="1" y2="0"><stop offset="0" stop-color="#f7e08a"/><stop offset=".5" stop-color="#efc85a"/><stop offset="1" stop-color="#d9a93a"/></linearGradient></defs><path d="M1.5 2 L6.5 .8 L8 2 V14.5 L2.5 15.5 L1.5 14 Z" fill="url(#g34)"/><path d="M7 1.5 L11 1.5 V13 L7.5 14.8 Z" fill="#e9c35a"/><path d="M7.2 1.8 V14.6" stroke="#a8873a" stroke-width=".8"/><path d="M9.3 6.5 H13.3 V10 H15.6 L11.3 15.2 L7 10 H9.3 Z" fill="#2f8fe6" stroke="#1a6ac4" stroke-width=".6"/></svg><span style="left:50.5px;letter-spacing:-0.328px;">Downloads</span></div><div class="tr" style="top:66px"><svg class="ti" style="left:30px;margin-top:0px" width="16" height="16" viewBox="0 0 16 16"><rect x="3.5" y="3.5" width="11" height="10" fill="#eef2f6" stroke="#9aa4ae" stroke-width="1"/><rect x="5.5" y="5.5" width="3" height="3" fill="#7fa6d8"/><rect x="10" y="5.5" width="3" height="3" fill="#c66"/><rect x="5.5" y="9.5" width="3" height="2.5" fill="#8a9"/><rect x="10" y="9.5" width="3" height="2.5" fill="#7fa6d8"/><path d="M2 13.5 H15.5 L14 15.5 H3.5Z" fill="#b5bcc2"/><circle cx="3.8" cy="3.8" r="3.3" fill="#f4f6f8" stroke="#8a949e" stroke-width=".9"/><path d="M3.8 1.8 V3.9 H5.4" stroke="#556" stroke-width=".8" fill="none"/></svg><span style="left:50.5px;letter-spacing:-0.378px;">Recent Places</span></div><div class="tr" style="top:104px"><i class="ex" style="left:8px"></i><svg class="ti" style="left:20px;margin-top:1px" width="16" height="16" viewBox="0 0 16 16"><defs><linearGradient id="g35" x1="0" y1="0" x2="0" y2="1"><stop offset="0" stop-color="#fbe9a0"/><stop offset="1" stop-color="#eec45a"/></linearGradient></defs><path d="M.8 2.2 H6 L7.2 3.4 H15.4 V11 H.8 Z" fill="url(#g35)" stroke="#d8b250" stroke-width=".6"/><path d="M3 14.6 V8.8 Q3 7.2 4.6 7.2 H11.6 Q13.2 7.2 13.2 8.8 V14.6 H10.4 V11 Q10.4 10.2 9.6 10.2 H6.6 Q5.8 10.2 5.8 11 V14.6 Z" fill="#4a9be8" stroke="#8fc4f2" stroke-width=".7"/><path d="M2 5.2 H14.4" stroke="#8fd08a" stroke-width="1"/></svg><span style="left:40.5px;letter-spacing:-0.311px;">Libraries</span></div><div class="tr" style="top:123px"><i class="ex p" style="left:18px"></i><svg class="ti" style="left:30px;margin-top:0px" width="16" height="16" viewBox="0 0 16 16"><path d="M2.5 .8 H10 L13.5 4.2 V15.2 H2.5 Z" fill="#fbfcfe" stroke="#98a4b6" stroke-width=".9"/><path d="M10 .8 V4.2 H13.5" fill="#e4e9f2" stroke="#98a4b6" stroke-width=".8"/><rect x="7.5" y="6" width="4" height="3.6" fill="#3f5f9e"/><path d="M4.2 6.5 H6.6 M4.2 8.5 H6.6 M4.2 10.8 H11.6 M4.2 12.8 H11.6" stroke="#8ea0bc" stroke-width=".9"/></svg><span style="left:50.5px;letter-spacing:-0.355px;">Documents</span></div><div class="tr" style="top:142px"><i class="ex p" style="left:18px"></i><svg class="ti" style="left:30px;margin-top:0px" width="16" height="16" viewBox="0 0 16 16"><defs><radialGradient id="g36" cx=".4" cy=".35" r=".7"><stop offset="0" stop-color="#9fdcff"/><stop offset=".6" stop-color="#2f8fe0"/><stop offset="1" stop-color="#1560b4"/></radialGradient></defs><ellipse cx="6.4" cy="12.4" rx="5" ry="3.5" fill="url(#g36)" transform="rotate(-15 6.4 12.4)"/><path d="M9.6 12.6 V.6 C10.4 3.2 15.6 4.4 14.2 10.4 C14 7 11.8 5.8 11.2 5.6 V12.6 Z" fill="#2f86d8"/></svg><span style="left:50.5px;letter-spacing:-0.784px;">Music</span></div><div class="tr" style="top:161px"><i class="ex p" style="left:18px"></i><svg class="ti" style="left:30px;margin-top:0px" width="16" height="16" viewBox="0 0 16 16"><defs><linearGradient id="g37" x1="0" y1="0" x2="0" y2="1"><stop offset="0" stop-color="#cfe6f6"/><stop offset=".45" stop-color="#8ec4dc"/><stop offset=".6" stop-color="#2f7a78"/><stop offset="1" stop-color="#3f9ac8"/></linearGradient></defs><rect x=".5" y="2" width="15.5" height="12" fill="#f4f6f8" stroke="#8f9aa8" stroke-width=".9"/><rect x="2.2" y="3.7" width="12" height="8.6" fill="url(#g37)"/></svg><span style="left:50.5px;letter-spacing:-0.307px;">Pictures</span></div><div class="tr" style="top:180px"><i class="ex p" style="left:18px"></i><svg class="ti" style="left:30px;margin-top:0px" width="16" height="16" viewBox="0 0 16 16"><rect x="1.5" y=".5" width="13" height="15.4" fill="#2a2e36"/><rect x="4.2" y="1.2" width="7.6" height="6.2" fill="#c66a4a"/><rect x="4.2" y="8.4" width="7.6" height="6.4" fill="#4a9fd8"/><path d="M4.2 5 L8 3 L11.8 5.4 V7.4 H4.2Z" fill="#7a3a2a"/><path d="M4.2 12.2 L8 10.6 L11.8 12.6 V14.8 H4.2Z" fill="#2a6ea8"/><rect x="2.1" y="1.4" width="1.3" height="1.5" fill="#e8ecf0"/><rect x="12.6" y="1.4" width="1.3" height="1.5" fill="#e8ecf0"/><rect x="2.1" y="4.2" width="1.3" height="1.5" fill="#e8ecf0"/><rect x="12.6" y="4.2" width="1.3" height="1.5" fill="#e8ecf0"/><rect x="2.1" y="7" width="1.3" height="1.5" fill="#e8ecf0"/><rect x="12.6" y="7" width="1.3" height="1.5" fill="#e8ecf0"/><rect x="2.1" y="9.8" width="1.3" height="1.5" fill="#e8ecf0"/><rect x="12.6" y="9.8" width="1.3" height="1.5" fill="#e8ecf0"/><rect x="2.1" y="12.6" width="1.3" height="1.5" fill="#e8ecf0"/><rect x="12.6" y="12.6" width="1.3" height="1.5" fill="#e8ecf0"/></svg><span style="left:50.5px;letter-spacing:-0.487px;">Videos</span></div><div class="tr" style="top:218px"><i class="ex" style="left:8px"></i><svg class="ti" style="left:20px;margin-top:0px" width="16" height="16" viewBox="0 0 16 16"><defs><linearGradient id="g38" x1="0" y1="0" x2="1" y2="1"><stop offset="0" stop-color="#2a4fd0"/><stop offset=".5" stop-color="#1a34b0"/><stop offset="1" stop-color="#6a9ae8"/></linearGradient></defs><rect x=".3" y="5" width="2.4" height="9.4" rx=".8" fill="#c8ccd0" stroke="#8a9096" stroke-width=".6"/><rect x=".9" y="6.2" width="1.2" height="1" fill="#5c8"/><rect x="4" y=".8" width="11.4" height="9" fill="url(#g38)" stroke="#b8c0cc" stroke-width="1.1"/><path d="M8 10.4 H11.6 L12 12.4 H7.6Z" fill="#a8aeb6"/><rect x="5.6" y="12.3" width="8.4" height="1.4" rx=".6" fill="#c4c8ce" stroke="#8a9096" stroke-width=".4"/></svg><span style="left:40.5px;letter-spacing:-0.285px;">Computer</span></div><div class="tr" style="top:237px"><i class="ex p" style="left:18px"></i><svg class="ti" style="left:30px;margin-top:0px" width="16" height="16" viewBox="0 0 16 16"><defs><linearGradient id="g39" x1="0" y1="0" x2="0" y2="1"><stop offset="0" stop-color="#b8d4d8"/><stop offset=".5" stop-color="#4f8a98"/><stop offset="1" stop-color="#2f5f70"/></linearGradient></defs><path d="M2.5 8.5 L4.5 6.5 H12.5 L14.5 8.5 Z" fill="#c8d4d8"/><rect x=".8" y="9" width="15" height="5.6" rx="1" fill="url(#g39)" stroke="#6a8a94" stroke-width=".6"/><rect x="2" y="12.2" width="12.6" height="1" fill="#1f4858" opacity=".6"/><path d="M4.6 1.6 Q6.4 .4 8.2 1.6 L7.6 5 Q6 4 4 5Z" fill="#e8502a"/><path d="M8.9 1.8 Q10.6 2.8 12.4 1.6 L11.6 5 Q10 6 8.2 5.2Z" fill="#6cbf3a"/><path d="M3.9 5.6 Q5.8 4.6 7.5 5.7 L7 8.8 Q5.2 7.8 3.4 8.8Z" fill="#2a8ae0"/><path d="M8.1 5.9 Q9.8 6.8 11.5 5.7 L10.9 8.8 Q9.2 9.8 7.6 9Z" fill="#f8c020"/></svg><span style="left:50.5px;letter-spacing:-0.28px;">Local Disk (C:)</span></div><div class="tr" style="top:275px"><i class="ex p" style="left:8px"></i><svg class="ti" style="left:20px;margin-top:0px" width="16" height="16" viewBox="0 0 16 16"><defs><radialGradient id="g40" cx=".4" cy=".35" r=".7"><stop offset="0" stop-color="#7fe08a"/><stop offset=".5" stop-color="#2aa0a8"/><stop offset="1" stop-color="#1a5fc0"/></radialGradient><linearGradient id="g41" x1="0" y1="0" x2="1" y2="1"><stop offset="0" stop-color="#2a4fd8"/><stop offset="1" stop-color="#1a2fa8"/></linearGradient></defs><circle cx="5.4" cy="5.4" r="5" fill="url(#g40)"/><path d="M2 3.6 Q4 1.6 6.4 2.4 Q6 4.6 3.6 5.2 Q2.4 6.6 3.4 8.4 Q1.4 7 2 3.6Z" fill="#4fd06a" opacity=".9"/><rect x="6.6" y="5" width="9" height="7.4" fill="url(#g41)" stroke="#7f9ae0" stroke-width=".8"/><path d="M10 12.6 H12 L12.4 14.6 H9.6Z" fill="#8a96b0"/><rect x="8.2" y="14.4" width="5.6" height="1.2" fill="#7a86a0"/></svg><span style="left:40.5px;letter-spacing:0.009px;">Network</span></div></div>
<div id="files"><div class="th" style="left:20px;top:55px;background:#fff"><i class="abs" style="left:35px;top:19px;width:18px;height:1px;background:#c9cde6"></i></div><div class="th" style="left:143px;top:55px;background:#000"><i class="abs" style="left:27px;top:5px;width:18px;height:1px;background:#2a2a2a"></i></div><div class="th" style="left:266px;top:55px;background:#000"><i class="abs" style="left:60px;top:9px;width:10px;height:1px;background:#4a2a2a"></i></div><div class="th" style="left:389px;top:55px;background:#fff"><i class="abs" style="left:75px;top:37px;width:12px;height:1px;background:#d8a8c8"></i></div><div class="th" style="left:512px;top:55px;background:#000"><i class="abs" style="left:36px;top:3px;width:18px;height:1px;background:#222"></i></div><div class="th" style="left:20px;top:183px;background:#000"><i class="abs" style="left:60px;top:12px;width:20px;height:1px;background:#5a6a5a"></i></div><div class="th" style="left:143px;top:183px;background:#fff"><i class="abs" style="left:36px;top:38px;width:26px;height:1px;background:#8fd8b8"></i></div><div class="fl" style="left:5px;top:105px"><span style="letter-spacing:-0.052px;margin-right:0.052px">corporationvalues.</span><br><span style="letter-spacing:-0.43px;margin-right:0.43px">png</span></div><div class="fl" style="left:128.5px;top:105px"><span style="letter-spacing:-0.245px;margin-right:0.245px">minimumarticles.jpg</span></div><div class="fl" style="left:251px;top:105px"><span style="letter-spacing:0.085px;margin-right:-0.085px">newsthing.jpg</span></div><div class="fl" style="left:374.5px;top:105px"><span style="letter-spacing:0.01px;margin-right:-0.01px">oneforum.png</span></div><div class="fl" style="left:497.5px;top:105px"><span style="letter-spacing:-0.325px;margin-right:0.325px">searchesmanageme</span><br><span style="letter-spacing:0.516px;margin-right:-0.516px">nt.jpg</span></div><div class="fl" style="left:5.5px;top:233px"><span style="letter-spacing:0.023px;margin-right:-0.023px">studentsdue.jpg</span></div><div class="fl" style="left:128.5px;top:233px"><span style="letter-spacing:-0.094px;margin-right:0.094px">timesdvd.png</span></div></div>
<div id="det"><svg class="abs" style="left:20px;top:1px;" width="35" height="41" viewBox="0 0 35 41"><defs><linearGradient id="g51" x1="0" y1="0" x2="1" y2="0"><stop offset="0" stop-color="#faeaa6"/><stop offset=".6" stop-color="#f0d070"/><stop offset="1" stop-color="#e2b850"/></linearGradient><linearGradient id="g52" x1="0" y1="0" x2="1" y2="0"><stop offset="0" stop-color="#d9b65a"/><stop offset="1" stop-color="#f1d98c"/></linearGradient><linearGradient id="g53" x1="0" y1="0" x2="1" y2="1"><stop offset="0" stop-color="#55b4f6"/><stop offset="1" stop-color="#1872d2"/></linearGradient></defs><path d="M11 3 L24 3 L24.5 33 L12 38 Z" fill="url(#g52)"/><path d="M1 4 L10.5 1 L13 4.5 L13 36 L8 40 L2.5 35 Z" fill="url(#g51)" stroke="#e6c766" stroke-width=".6"/><path d="M18 15 H28 V25 H34 L24 38.5 L13.5 25 H18 Z" fill="url(#g53)" stroke="#2a7fd8" stroke-width=".7"/></svg><span class="abs" style="left:78px;top:6px;font-size:12px;line-height:14px;letter-spacing:0.135px;">7 items</span></div>
</div>

<svg class="abs" style="left:1030px;top:600px" width="220" height="80" viewBox="0 0 220 80" opacity=".5">
<g fill="#fff" stroke="#fff" stroke-width="1.1" font-family="Liberation Sans,sans-serif" font-size="52">
<text x="9" y="59.3" textLength="63" lengthAdjust="spacingAndGlyphs">ANY</text>
<text x="140.5" y="59.3" textLength="60" lengthAdjust="spacingAndGlyphs">RUN</text></g>
<g fill="none" stroke="#fff" stroke-width="3.1" stroke-linejoin="round" stroke-linecap="round">
<path d="M87 17.9 Q82.3 17.4 82.3 22 L82.3 61 Q82.3 65.2 85.8 63.2 L132.7 35.9 L92.1 11.7 L92.1 54.5"/>
<path d="M96.2 24.6 L132.7 45.1 L92.6 69.4 Q89.4 70.8 89.8 66.5"/>
</g></svg>
<div id="tb">
<div class="btn" style="left:2px;top:4px;width:52px;height:22px"><svg class="abs" style="left:2px;top:2px;overflow:visible" width="16" height="16" viewBox="0 0 16 16"><path d="M1.6 3.2 Q4.4 1.2 7.4 3 L6.4 7.6 Q3.6 6 .6 7.8Z" fill="#f0582a"/><path d="M8.4 3.4 Q11.2 4.8 14.6 2.8 L13.4 7.4 Q10.4 9.2 7.4 7.8Z" fill="#7cc242"/><path d="M.4 8.8 Q3.4 7 6.2 8.6 L5.2 13.2 Q2.4 11.6 -.6 13.4Z" fill="#2a8ee6"/><path d="M7.2 8.9 Q10.2 10.4 13.2 8.6 L12.2 13 Q9 15 6.2 13.4Z" fill="#fcc21e"/></svg><b class="abs" style="left:18px;top:0;line-height:20px;font-size:12px;letter-spacing:0.264px;">Start</b></div>
<svg class="abs" style="left:70px;top:6px;overflow:visible" width="18" height="18" viewBox="0 0 18 18"><path d="M15.4 11.2 A6.6 6.6 0 1 1 15.6 8.4 H5.8" fill="none" stroke="#2a8fe0" stroke-width="3"/><path d="M3 9.9 H15.6" stroke="#2a8fe0" stroke-width="2.4"/><path d="M1.4 15.6 C-.6 11 6 2.6 15.6 1.6 C17.8 1.6 17.8 3.4 16.8 4.6 C16.6 2.6 13.4 3 10.8 4.6 C6 7.6 2 12.4 3.2 15.4 C2.4 16.4 1.8 16.2 1.4 15.6Z" fill="#f2c230"/></svg>
<div class="btn down" style="left:97px;top:4px;width:32px;height:22px"><svg class="abs" style="left:7px;top:3.5px" width="17" height="13.6" viewBox="0 0 20 16"><defs><linearGradient id="g54" x1="0" y1="0" x2="0" y2="1"><stop offset="0" stop-color="#fbe89a"/><stop offset="1" stop-color="#f0c85a"/></linearGradient></defs><path d="M1 1.5 H7.4 L8.8 3 H19 V11 H1 Z" fill="url(#g54)" stroke="#e0b850" stroke-width=".6"/><path d="M2 4.6 H18" stroke="#a8d890" stroke-width="1"/><path d="M3.2 15.4 V9 Q3.2 7 5.2 7 H14.8 Q16.8 7 16.8 9 V15.4 H13 V11.4 Q13 10.6 12.2 10.6 H7.8 Q7 10.6 7 11.4 V15.4 Z" fill="#3f94e6" stroke="#9fcdf4" stroke-width=".8"/></svg></div>
<svg class="abs" style="left:139px;top:6.6px" width="16" height="16" viewBox="0 0 17 17"><defs><radialGradient id="g55" cx=".4" cy=".35" r=".7"><stop offset="0" stop-color="#ffc04a"/><stop offset=".6" stop-color="#f58a14"/><stop offset="1" stop-color="#d86808"/></radialGradient></defs><rect x=".6" y=".6" width="15.8" height="15.8" fill="#7ab0ee" stroke="#5a94e0" stroke-width="1.1"/><rect x="2.2" y="2.2" width="12.6" height="12.6" fill="#bccbe0"/><circle cx="8.5" cy="8.5" r="5.8" fill="url(#g55)" stroke="#fbe0b0" stroke-width=".6"/><path d="M6.6 5.4 L12 8.5 L6.6 11.6Z" fill="#fff"/></svg>
<div class="btn" style="left:165px;top:4px;width:32px;height:22px"><svg class="abs" style="left:7px;top:2px;" width="16" height="16" viewBox="0 0 16 16"><clipPath id="chc55"><circle cx="8" cy="8" r="7"/></clipPath><g clip-path="url(#chc55)"><path d="M8.00 8.00 L10.86 9.65 L0.36 27.84 L-13.00 29.00 L-13.00 -2.50 L-5.36 -8.54 L5.14 9.65 Z" fill="#2ca24c"/><path d="M8.00 8.00 L8.00 4.70 L29.00 4.70 L29.00 -13.00 L-13.00 -13.00 L-5.36 -8.54 L5.14 9.65 Z" fill="#e94235"/><path d="M8.00 8.00 L8.00 4.70 L29.00 4.70 L29.00 29.00 L0.36 27.84 L10.86 9.65 Z" fill="#fcc31e"/></g><circle cx="8" cy="8" r="3.3" fill="#fff"/><circle cx="8" cy="8" r="2.5" fill="#4a86ee"/></svg></div>
<svg class="abs" style="left:207px;top:7px;" width="16" height="16" viewBox="0 0 16 16"><defs><radialGradient id="g57" cx=".35" cy=".25" r=".85"><stop offset="0" stop-color="#ff7a7a"/><stop offset=".4" stop-color="#e8202a"/><stop offset="1" stop-color="#a00812"/></radialGradient></defs><ellipse cx="8" cy="8.2" rx="2.6" ry="5.8" fill="#f6dada"/><path fill-rule="evenodd" d="M8 .4 A7.6 7.8 0 1 1 8 16 A7.6 7.8 0 1 1 8 .4 Z M8 2.6 C6.4 2.6 5.6 5 5.6 8.2 C5.6 11.4 6.4 13.8 8 13.8 C9.6 13.8 10.4 11.4 10.4 8.2 C10.4 5 9.6 2.6 8 2.6Z" fill="url(#g57)"/></svg>
<div id="tray">
<svg class="abs" style="left:6px;top:5px;" width="7" height="9" viewBox="0 0 7 9"><path d="M.8 4 L3.5 1.2 L6.2 4 M.8 8 L3.5 5.2 L6.2 8" fill="none" stroke="#000" stroke-width="1.5"/></svg>
<svg class="abs" style="left:22px;top:3px;" width="18" height="16" viewBox="0 0 18 16"><path d="M1 5.5 H3.6 L7.2 2 V14 L3.6 10.5 H1Z" fill="#fdfdfd" stroke="#6e6e6e" stroke-width="1"/><path d="M9.2 5.4 Q11 8 9.2 10.6 M11.2 3.6 Q14 8 11.2 12.4 M13.2 2 Q17 8 13.2 14" fill="none" stroke="#7c7c7c" stroke-width="1.2"/></svg>
<svg class="abs" style="left:47px;top:2px;" width="17" height="17" viewBox="0 0 17 17"><rect x="5.5" y="3.5" width="10" height="9" fill="#8e8e8c" stroke="#f4f4f4" stroke-width="1.4"/><rect x="4.6" y="2.6" width="11.8" height="10.8" fill="none" stroke="#6a6a6a" stroke-width=".7"/><path d="M6 15.2 H15" stroke="#fff" stroke-width="1.6"/><path d="M5.4 16.3 H15.6" stroke="#666" stroke-width=".8"/><path d="M1.4 1 V5 Q1.4 6.4 3.4 6.4 Q5.4 6.4 5.4 5 V1" fill="none" stroke="#fff" stroke-width="1.6"/><path d="M.5 .6 V5.2 Q.7 7.3 3.4 7.3 Q6.1 7.3 6.3 5.2 V.6" fill="none" stroke="#5c5c5c" stroke-width=".8"/><path d="M3.4 7 V15.4 H6" fill="none" stroke="#fff" stroke-width="1.4"/><path d="M2.5 7.4 V16.2" stroke="#5c5c5c" stroke-width=".7"/></svg>
<svg class="abs" style="left:71px;top:2px;" width="17" height="17" viewBox="0 0 17 17"><path d="M2 .6 V16" stroke="#fff" stroke-width="2.2"/><path d="M.7 .4 V16.3 H3.3 V.4Z" fill="none" stroke="#6e6e6e" stroke-width=".8"/><path d="M3.4 2 Q7 .4 9.6 2.4 Q12 4 15.4 2.8 L13.4 9 Q10.4 10.4 8 8.6 Q6 7.2 3.4 8.4Z" fill="#fdfdfd" stroke="#707070" stroke-width="1"/></svg>
<span class="abs" style="left:103px;top:0;line-height:20px;letter-spacing:-0.378px;">9:49 PM</span>
<svg class="abs" style="left:154px;top:5px;" width="16" height="12" viewBox="0 0 16 12"><defs><linearGradient id="g58" x1="0" y1="0" x2="1" y2="1"><stop offset="0" stop-color="#2a5fc8"/><stop offset=".6" stop-color="#4a94ea"/><stop offset="1" stop-color="#2a68cc"/></linearGradient></defs><rect x=".5" y=".5" width="15" height="11" fill="url(#g58)" stroke="#6a86c0" stroke-width=".8"/><rect x="1" y="8.8" width="14" height="2.4" fill="#1a2850"/><rect x="2" y="9.4" width="3" height="1.2" fill="#9fc0ee"/></svg>
</div>
</div>
</body></html>
